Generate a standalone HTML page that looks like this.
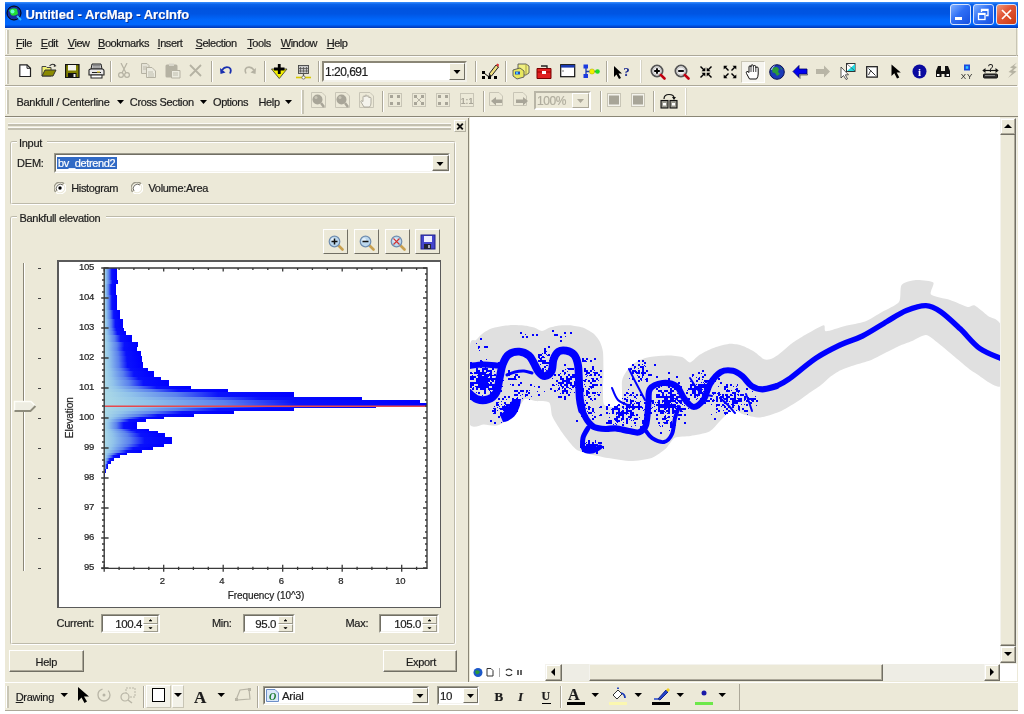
<!DOCTYPE html><html><head><meta charset="utf-8"><style>
html,body{margin:0;padding:0;width:1024px;height:714px;overflow:hidden;background:#fff;font-family:"Liberation Sans",sans-serif;}
.t{position:absolute;white-space:pre;line-height:1.117;-webkit-text-stroke:0.2px currentColor;}
u{text-decoration:underline;text-underline-offset:1px;}
</style></head><body>
<div id="w" style="position:absolute;left:0;top:0;width:1024px;height:714px;filter:blur(0.5px)"><div style="position:absolute;left:5px;top:2px;width:1013px;height:709px;background:#ECE9D8"></div>
<div style="position:absolute;left:5px;top:2px;width:1013px;height:26px;background:linear-gradient(to bottom,#3a90ff 0%,#0a62ea 9%,#0054e0 25%,#0055e3 45%,#0066fa 68%,#0068ff 86%,#0046d0 95%,#0038b0 100%)"></div>
<div class="t" style="left:25.5px;top:8.23px;font-size:13px;color:#fff;font-weight:bold;text-shadow:1px 1px 0 #0b2c8a;">Untitled - ArcMap - ArcInfo</div>
<svg style="position:absolute;left:6px;top:5px;" width="17" height="17" viewBox="0 0 17 17"><circle cx="8" cy="8" r="7" fill="#1a2fa0" stroke="#000" stroke-width="1"/><path d="M3 5 Q7 2 11 4 L12 9 Q8 12 5 10 Z" fill="#22dd33"/><circle cx="6.5" cy="6.5" r="2" fill="#66ffcc"/><line x1="11" y1="11" x2="15" y2="15" stroke="#33bbff" stroke-width="2"/></svg>
<div style="position:absolute;left:950px;top:4px;width:21px;height:21px;box-sizing:border-box;border:1px solid #d8e4fc;border-radius:3px;background:linear-gradient(135deg,#7fb0ff 0%,#2f6ff5 45%,#1650e0 100%)"></div>
<div style="position:absolute;left:973px;top:4px;width:21px;height:21px;box-sizing:border-box;border:1px solid #d8e4fc;border-radius:3px;background:linear-gradient(135deg,#7fb0ff 0%,#2f6ff5 45%,#1650e0 100%)"></div>
<div style="position:absolute;left:996px;top:4px;width:21px;height:21px;box-sizing:border-box;border:1px solid #d8e4fc;border-radius:3px;background:linear-gradient(135deg,#f09a7a 0%,#e2583a 40%,#cc3a10 100%)"></div>
<div style="position:absolute;left:955px;top:17px;width:7px;height:2.5px;background:#fff"></div>
<svg style="position:absolute;left:973px;top:4px;" width="21" height="21" viewBox="0 0 21 21"><rect x="5.5" y="9.5" width="6.5" height="6" fill="none" stroke="#fff" stroke-width="1.3"/><path d="M5.5 10 H12" stroke="#fff" stroke-width="2"/><path d="M8.5 8 V5.5 H15 V11.5 H13" fill="none" stroke="#fff" stroke-width="1.3"/><path d="M8.5 6 H15" stroke="#fff" stroke-width="2"/></svg>
<svg style="position:absolute;left:996px;top:4px;" width="21" height="21" viewBox="0 0 21 21"><path d="M6 6 L15 15 M15 6 L6 15" stroke="#fff" stroke-width="1.7"/></svg>
<div style="position:absolute;left:5px;top:28px;width:1013px;height:1px;background:#f8f7f0"></div>
<div style="position:absolute;left:6px;top:30px;width:1px;height:24px;background:#fff"></div>
<div style="position:absolute;left:7px;top:30px;width:2px;height:24px;background:#c9c6b6"></div>
<div class="t" style="left:16px;top:37.05px;font-size:11px;color:#1c1c1c;font-weight:normal;letter-spacing:-0.45px;"><u>F</u>ile</div>
<div class="t" style="left:40.8px;top:37.05px;font-size:11px;color:#1c1c1c;font-weight:normal;letter-spacing:-0.45px;"><u>E</u>dit</div>
<div class="t" style="left:67.7px;top:37.05px;font-size:11px;color:#1c1c1c;font-weight:normal;letter-spacing:-0.45px;"><u>V</u>iew</div>
<div class="t" style="left:98px;top:37.05px;font-size:11px;color:#1c1c1c;font-weight:normal;letter-spacing:-0.45px;"><u>B</u>ookmarks</div>
<div class="t" style="left:157.6px;top:37.05px;font-size:11px;color:#1c1c1c;font-weight:normal;letter-spacing:-0.45px;"><u>I</u>nsert</div>
<div class="t" style="left:195.5px;top:37.05px;font-size:11px;color:#1c1c1c;font-weight:normal;letter-spacing:-0.45px;"><u>S</u>election</div>
<div class="t" style="left:247.3px;top:37.05px;font-size:11px;color:#1c1c1c;font-weight:normal;letter-spacing:-0.45px;"><u>T</u>ools</div>
<div class="t" style="left:280.7px;top:37.05px;font-size:11px;color:#1c1c1c;font-weight:normal;letter-spacing:-0.45px;"><u>W</u>indow</div>
<div class="t" style="left:326.7px;top:37.05px;font-size:11px;color:#1c1c1c;font-weight:normal;letter-spacing:-0.45px;"><u>H</u>elp</div>
<div style="position:absolute;left:5px;top:55px;width:1013px;height:1px;background:#ACA899"></div>
<div style="position:absolute;left:5px;top:56px;width:1013px;height:1px;#fff"></div>
<div style="position:absolute;left:5px;top:56px;width:1013px;height:1px;background:#fdfdfb"></div>
<div style="position:absolute;left:6px;top:60px;width:1px;height:24px;background:#fff"></div>
<div style="position:absolute;left:7px;top:60px;width:2px;height:24px;background:#c9c6b6"></div>
<div style="position:absolute;left:110px;top:61px;width:1px;height:21px;background:#ACA899"></div>
<div style="position:absolute;left:111px;top:61px;width:1px;height:21px;background:#fff"></div>
<div style="position:absolute;left:211px;top:61px;width:1px;height:21px;background:#ACA899"></div>
<div style="position:absolute;left:212px;top:61px;width:1px;height:21px;background:#fff"></div>
<div style="position:absolute;left:264px;top:61px;width:1px;height:21px;background:#ACA899"></div>
<div style="position:absolute;left:265px;top:61px;width:1px;height:21px;background:#fff"></div>
<div style="position:absolute;left:318px;top:61px;width:1px;height:21px;background:#ACA899"></div>
<div style="position:absolute;left:319px;top:61px;width:1px;height:21px;background:#fff"></div>
<div style="position:absolute;left:475px;top:61px;width:1px;height:21px;background:#ACA899"></div>
<div style="position:absolute;left:476px;top:61px;width:1px;height:21px;background:#fff"></div>
<div style="position:absolute;left:505px;top:61px;width:1px;height:21px;background:#ACA899"></div>
<div style="position:absolute;left:506px;top:61px;width:1px;height:21px;background:#fff"></div>
<div style="position:absolute;left:606px;top:61px;width:1px;height:21px;background:#ACA899"></div>
<div style="position:absolute;left:607px;top:61px;width:1px;height:21px;background:#fff"></div>
<div style="position:absolute;left:5px;top:85px;width:1013px;height:1px;background:#ACA899"></div>
<div style="position:absolute;left:5px;top:86px;width:1013px;height:1px;background:#fdfdfb"></div>
<div style="position:absolute;left:322px;top:61px;width:145px;height:21px;box-sizing:border-box;border:1px solid #7f9db9;background:#fff;border-color:#8a8676 #f2f1ea #f2f1ea #8a8676;border-width:2px"></div>
<div class="t" style="left:325px;top:66.14px;font-size:12px;color:#1c1c1c;font-weight:normal;letter-spacing:-0.5px;">1:20,691</div>
<div style="position:absolute;left:449px;top:63px;width:16px;height:17px;background:#ECE9D8;box-sizing:border-box;border:1px solid;border-color:#fff #716f64 #716f64 #fff"></div>
<svg style="position:absolute;left:449px;top:63px;" width="16" height="17" viewBox="0 0 16 17"><path d="M4.5 7 H11.5 L8 11 Z" fill="#000"/></svg>
<div style="position:absolute;left:6px;top:90px;width:1px;height:24px;background:#fff"></div>
<div style="position:absolute;left:7px;top:90px;width:2px;height:24px;background:#c9c6b6"></div>
<div class="t" style="left:16.4px;top:96.05px;font-size:11px;color:#1c1c1c;font-weight:normal;letter-spacing:-0.25px;">Bankfull / Centerline</div>
<svg style="position:absolute;left:117px;top:100px;" width="8" height="5" viewBox="0 0 8 5"><path d="M0 0 H7 L3.5 4 Z" fill="#000"/></svg>
<div class="t" style="left:129.8px;top:96.05px;font-size:11px;color:#1c1c1c;font-weight:normal;letter-spacing:-0.35px;">Cross Section</div>
<svg style="position:absolute;left:200px;top:100px;" width="8" height="5" viewBox="0 0 8 5"><path d="M0 0 H7 L3.5 4 Z" fill="#000"/></svg>
<div class="t" style="left:213px;top:96.05px;font-size:11px;color:#1c1c1c;font-weight:normal;letter-spacing:-0.4px;">Options</div>
<div class="t" style="left:258.4px;top:96.05px;font-size:11px;color:#1c1c1c;font-weight:normal;letter-spacing:-0.3px;">Help</div>
<svg style="position:absolute;left:285px;top:100px;" width="8" height="5" viewBox="0 0 8 5"><path d="M0 0 H7 L3.5 4 Z" fill="#000"/></svg>
<div style="position:absolute;left:301px;top:90px;width:1px;height:24px;background:#fff"></div>
<div style="position:absolute;left:302px;top:90px;width:2px;height:24px;background:#c9c6b6"></div>
<div style="position:absolute;left:382px;top:91px;width:1px;height:21px;background:#ACA899"></div>
<div style="position:absolute;left:383px;top:91px;width:1px;height:21px;background:#fff"></div>
<div style="position:absolute;left:483px;top:91px;width:1px;height:21px;background:#ACA899"></div>
<div style="position:absolute;left:484px;top:91px;width:1px;height:21px;background:#fff"></div>
<div style="position:absolute;left:600px;top:91px;width:1px;height:21px;background:#ACA899"></div>
<div style="position:absolute;left:601px;top:91px;width:1px;height:21px;background:#fff"></div>
<div style="position:absolute;left:653px;top:91px;width:1px;height:21px;background:#ACA899"></div>
<div style="position:absolute;left:654px;top:91px;width:1px;height:21px;background:#fff"></div>
<div style="position:absolute;left:5px;top:116px;width:1013px;height:1px;background:#8a8676"></div>
<div style="position:absolute;left:534px;top:91px;width:57px;height:19px;box-sizing:border-box;border:2px solid;border-color:#b8b5a6 #fff #fff #b8b5a6"></div>
<div class="t" style="left:537px;top:95.14px;font-size:12px;color:#b0ad9e;font-weight:normal;letter-spacing:-0.4px;">100%</div>
<div style="position:absolute;left:572px;top:93px;width:17px;height:15px;box-sizing:border-box;border:1px solid;border-color:#fff #aca899 #aca899 #fff"></div>
<svg style="position:absolute;left:572px;top:93px;" width="17" height="15" viewBox="0 0 17 15"><path d="M5 6 H12 L8.5 10 Z" fill="#aca899"/></svg>
<div style="position:absolute;left:5px;top:117px;width:464px;height:565px;background:#ECE9D8"></div>
<div style="position:absolute;left:468px;top:117px;width:1px;height:565px;background:#8a8676"></div>
<div style="position:absolute;left:5px;top:117px;width:464px;height:1px;background:#f7f6f0"></div>
<div style="position:absolute;left:8px;top:122.5px;width:443px;height:1.5px;background:#fbfaf5"></div>
<div style="position:absolute;left:8px;top:124.0px;width:443px;height:1.5px;background:#c3c0b0"></div>
<div style="position:absolute;left:8px;top:126.5px;width:443px;height:1.5px;background:#fbfaf5"></div>
<div style="position:absolute;left:8px;top:128.0px;width:443px;height:1.5px;background:#c3c0b0"></div>
<div style="position:absolute;left:454px;top:120px;width:12px;height:12px;box-sizing:border-box;border:1px solid;border-color:#fff #b5b2a2 #b5b2a2 #fff"></div>
<svg style="position:absolute;left:454px;top:120px;" width="12" height="12" viewBox="0 0 12 12"><path d="M3.2 3.7 L8.8 9.3 M8.8 3.7 L3.2 9.3" stroke="#111" stroke-width="1.9"/></svg>
<div style="position:absolute;left:10px;top:141px;width:446px;height:64px;box-sizing:border-box;border:1px solid;border-color:#bdbaaa #fff #fff #bdbaaa;border-radius:3px"></div>
<div style="position:absolute;left:11px;top:142px;width:444px;height:62px;box-sizing:border-box;border:1px solid;border-color:#fff #bdbaaa #bdbaaa #fff;border-radius:2px"></div>
<div style="position:absolute;left:16.5px;top:135px;width:30px;height:12px;background:#ECE9D8"></div>
<div class="t" style="left:19.0px;top:136.64px;font-size:11px;color:#1c1c1c;font-weight:normal;letter-spacing:-0.3px;">Input</div>
<div class="t" style="left:17px;top:157.04px;font-size:11px;color:#1c1c1c;font-weight:normal;letter-spacing:-0.2px;">DEM:</div>
<div style="position:absolute;left:54px;top:153px;width:396px;height:20px;box-sizing:border-box;border:1px solid;border-color:#9c9a8c #fff #fff #9c9a8c;background:#fff"></div>
<div style="position:absolute;left:55px;top:154px;width:394px;height:18px;box-sizing:border-box;border:1px solid;border-color:#716f64 #f4f3ee #f4f3ee #716f64;"></div>
<div style="position:absolute;left:57px;top:157px;width:60px;height:12px;background:#316ac5"></div>
<div class="t" style="left:58px;top:157.04px;font-size:11px;color:#fff;font-weight:normal;letter-spacing:-0.35px;">bv_detrend2</div>
<div style="position:absolute;left:432px;top:155px;width:17px;height:16px;background:#ECE9D8;box-sizing:border-box;border:1px solid;border-color:#fff #716f64 #716f64 #fff;box-shadow:inset -1px -1px 0 #aca899"></div>
<svg style="position:absolute;left:432px;top:155px;" width="17" height="17" viewBox="0 0 17 17"><path d="M4.5 7 H11.5 L8 11 Z" fill="#000"/></svg>
<svg style="position:absolute;left:54px;top:182px;" width="12" height="12" viewBox="0 0 12 12"><path d="M10.2 1.8 A5.6 5.6 0 0 0 1.8 10.2" fill="none" stroke="#9a988a" stroke-width="1.2"/><path d="M1.8 10.2 A5.6 5.6 0 0 0 10.2 1.8" fill="none" stroke="#fff" stroke-width="1.2"/><circle cx="6" cy="6" r="4.3" fill="#fff"/><path d="M9 3 A4.3 4.3 0 0 0 3 9" fill="none" stroke="#5a5850" stroke-width="0.9"/><circle cx="6" cy="6" r="1.7" fill="#000"/></svg>
<div class="t" style="left:71.2px;top:182.04px;font-size:11px;color:#1c1c1c;font-weight:normal;letter-spacing:-0.35px;">Histogram</div>
<svg style="position:absolute;left:131px;top:182px;" width="12" height="12" viewBox="0 0 12 12"><path d="M10.2 1.8 A5.6 5.6 0 0 0 1.8 10.2" fill="none" stroke="#9a988a" stroke-width="1.2"/><path d="M1.8 10.2 A5.6 5.6 0 0 0 10.2 1.8" fill="none" stroke="#fff" stroke-width="1.2"/><circle cx="6" cy="6" r="4.3" fill="#fff"/><path d="M9 3 A4.3 4.3 0 0 0 3 9" fill="none" stroke="#5a5850" stroke-width="0.9"/></svg>
<div class="t" style="left:148.4px;top:182.04px;font-size:11px;color:#1c1c1c;font-weight:normal;letter-spacing:-0.3px;">Volume:Area</div>
<div style="position:absolute;left:10px;top:216px;width:446px;height:429px;box-sizing:border-box;border:1px solid;border-color:#bdbaaa #fff #fff #bdbaaa;border-radius:3px"></div>
<div style="position:absolute;left:11px;top:217px;width:444px;height:427px;box-sizing:border-box;border:1px solid;border-color:#fff #bdbaaa #bdbaaa #fff;border-radius:2px"></div>
<div style="position:absolute;left:17px;top:210px;width:89px;height:12px;background:#ECE9D8"></div>
<div class="t" style="left:19.5px;top:211.64px;font-size:11px;color:#1c1c1c;font-weight:normal;letter-spacing:-0.3px;">Bankfull elevation</div>
<div style="position:absolute;left:323px;top:229px;width:25px;height:25px;box-sizing:border-box;border:1px solid;border-color:#fff #716f64 #716f64 #fff;background:#ECE9D8"></div>
<div style="position:absolute;left:354px;top:229px;width:25px;height:25px;box-sizing:border-box;border:1px solid;border-color:#fff #716f64 #716f64 #fff;background:#ECE9D8"></div>
<div style="position:absolute;left:385px;top:229px;width:25px;height:25px;box-sizing:border-box;border:1px solid;border-color:#fff #716f64 #716f64 #fff;background:#ECE9D8"></div>
<div style="position:absolute;left:415px;top:229px;width:25px;height:25px;box-sizing:border-box;border:1px solid;border-color:#fff #716f64 #716f64 #fff;background:#ECE9D8"></div>
<svg style="position:absolute;left:328px;top:235px;" width="16" height="16" viewBox="0 0 16 16"><line x1="10" y1="10" x2="14.5" y2="14.5" stroke="#c8a050" stroke-width="2.6" stroke-linecap="round"/><circle cx="6.5" cy="6.5" r="5.3" fill="#bcd8ee" stroke="#6f8db0" stroke-width="1.2"/><circle cx="5" cy="5" r="2" fill="#e4f0fa"/><path d="M3.5 6.5 H9.5 M6.5 3.5 V9.5" stroke="#111" stroke-width="1.5"/></svg>
<svg style="position:absolute;left:359px;top:235px;" width="16" height="16" viewBox="0 0 16 16"><line x1="10" y1="10" x2="14.5" y2="14.5" stroke="#c8a050" stroke-width="2.6" stroke-linecap="round"/><circle cx="6.5" cy="6.5" r="5.3" fill="#bcd8ee" stroke="#6f8db0" stroke-width="1.2"/><circle cx="5" cy="5" r="2" fill="#e4f0fa"/><path d="M3.5 6.5 H9.5" stroke="#111" stroke-width="1.5"/></svg>
<svg style="position:absolute;left:390px;top:235px;" width="16" height="16" viewBox="0 0 16 16"><line x1="10" y1="10" x2="14.5" y2="14.5" stroke="#c8a050" stroke-width="2.6" stroke-linecap="round"/><circle cx="6.5" cy="6.5" r="5.3" fill="#bcd8ee" stroke="#6f8db0" stroke-width="1.2"/><circle cx="5" cy="5" r="2" fill="#e4f0fa"/><path d="M3.5 3.5 L9.5 9.5 M9.5 3.5 L3.5 9.5" stroke="#d03030" stroke-width="1.1"/></svg>
<svg style="position:absolute;left:420px;top:234px;" width="16" height="16" viewBox="0 0 16 16"><rect x="1" y="1" width="14" height="14" fill="#4444cc" stroke="#22228a"/><rect x="4" y="2" width="8" height="6" fill="#eef"/><rect x="4" y="10" width="7" height="5" fill="#223"/><rect x="8" y="11" width="2" height="3" fill="#aab"/></svg>
<div style="position:absolute;left:23px;top:263px;width:1px;height:308px;background:#8a8676"></div>
<div style="position:absolute;left:24px;top:263px;width:1px;height:308px;background:#fff"></div>
<div style="position:absolute;left:37.5px;top:267.5px;width:3.5px;height:1px;background:#444"></div>
<div style="position:absolute;left:37.5px;top:297.5px;width:3.5px;height:1px;background:#444"></div>
<div style="position:absolute;left:37.5px;top:327.5px;width:3.5px;height:1px;background:#444"></div>
<div style="position:absolute;left:37.5px;top:357.5px;width:3.5px;height:1px;background:#444"></div>
<div style="position:absolute;left:37.5px;top:387.5px;width:3.5px;height:1px;background:#444"></div>
<div style="position:absolute;left:37.5px;top:417.5px;width:3.5px;height:1px;background:#444"></div>
<div style="position:absolute;left:37.5px;top:447.5px;width:3.5px;height:1px;background:#444"></div>
<div style="position:absolute;left:37.5px;top:477.5px;width:3.5px;height:1px;background:#444"></div>
<div style="position:absolute;left:37.5px;top:507.5px;width:3.5px;height:1px;background:#444"></div>
<div style="position:absolute;left:37.5px;top:537.5px;width:3.5px;height:1px;background:#444"></div>
<div style="position:absolute;left:37.5px;top:567.5px;width:3.5px;height:1px;background:#444"></div>
<svg style="position:absolute;left:13px;top:400px;" width="24" height="13" viewBox="0 0 24 13"><path d="M1.5 1.5 H18 L22.5 6 L17.5 11 H1.5 Z" fill="#eeede2"/><path d="M1.5 11 V1.5 H18 L22.5 6" fill="none" stroke="#fdfdf8" stroke-width="1.5"/><path d="M1.5 11 H17.5 L22.5 6" fill="none" stroke="#8e8c7c" stroke-width="1.8"/></svg>
<div style="position:absolute;left:57px;top:260px;width:384px;height:348px;box-sizing:border-box;border:2px solid #5a5a5a;border-right-width:1.5px;border-bottom-width:1.5px;background:#fff"></div>
<svg style="position:absolute;left:57px;top:260px;" width="384" height="347" viewBox="0 0 384 347"><defs><linearGradient id="hg" x1="0" y1="0" x2="1" y2="0"><stop offset="0" stop-color="#acdae6"/><stop offset="0.14" stop-color="#90c2ea"/><stop offset="0.38" stop-color="#5a80ee"/><stop offset="0.6" stop-color="#0a12fc"/><stop offset="1" stop-color="#0000ff"/></linearGradient></defs><g transform="translate(-57,-260)"><rect x="104.2" y="268" width="12.5" height="12" fill="url(#hg)" shape-rendering="crispEdges"/><rect x="104.2" y="280" width="13.6" height="4" fill="url(#hg)" shape-rendering="crispEdges"/><rect x="104.2" y="284" width="11.3" height="11" fill="url(#hg)" shape-rendering="crispEdges"/><rect x="104.2" y="295" width="12.8" height="15" fill="url(#hg)" shape-rendering="crispEdges"/><rect x="104.2" y="310" width="15.8" height="9" fill="url(#hg)" shape-rendering="crispEdges"/><rect x="104.2" y="319" width="18.4" height="9" fill="url(#hg)" shape-rendering="crispEdges"/><rect x="104.2" y="328" width="20.0" height="3" fill="url(#hg)" shape-rendering="crispEdges"/><rect x="104.2" y="331" width="21.8" height="4" fill="url(#hg)" shape-rendering="crispEdges"/><rect x="104.2" y="335" width="27.3" height="7" fill="url(#hg)" shape-rendering="crispEdges"/><rect x="104.2" y="342" width="33.6" height="5" fill="url(#hg)" shape-rendering="crispEdges"/><rect x="104.2" y="347" width="32.8" height="4" fill="url(#hg)" shape-rendering="crispEdges"/><rect x="104.2" y="351" width="36.3" height="5" fill="url(#hg)" shape-rendering="crispEdges"/><rect x="104.2" y="356" width="37.8" height="6" fill="url(#hg)" shape-rendering="crispEdges"/><rect x="104.2" y="362" width="38.8" height="6" fill="url(#hg)" shape-rendering="crispEdges"/><rect x="104.2" y="368" width="44.1" height="3" fill="url(#hg)" shape-rendering="crispEdges"/><rect x="104.2" y="371" width="49.4" height="6" fill="url(#hg)" shape-rendering="crispEdges"/><rect x="104.2" y="377" width="56.8" height="3" fill="url(#hg)" shape-rendering="crispEdges"/><rect x="104.2" y="380" width="65.2" height="6" fill="url(#hg)" shape-rendering="crispEdges"/><rect x="104.2" y="386" width="87.2" height="3" fill="url(#hg)" shape-rendering="crispEdges"/><rect x="104.2" y="389" width="123.3" height="3" fill="url(#hg)" shape-rendering="crispEdges"/><rect x="104.2" y="392" width="189.8" height="5" fill="url(#hg)" shape-rendering="crispEdges"/><rect x="104.2" y="397" width="257.8" height="3" fill="url(#hg)" shape-rendering="crispEdges"/><rect x="104.2" y="400" width="316.2" height="3" fill="url(#hg)" shape-rendering="crispEdges"/><rect x="104.2" y="403" width="322.8" height="3" fill="url(#hg)" shape-rendering="crispEdges"/><rect x="104.2" y="406" width="271.4" height="2" fill="url(#hg)" shape-rendering="crispEdges"/><rect x="104.2" y="408" width="189.8" height="3" fill="url(#hg)" shape-rendering="crispEdges"/><rect x="104.2" y="411" width="129.8" height="3" fill="url(#hg)" shape-rendering="crispEdges"/><rect x="104.2" y="414" width="89.3" height="3" fill="url(#hg)" shape-rendering="crispEdges"/><rect x="104.2" y="417" width="59.8" height="2" fill="url(#hg)" shape-rendering="crispEdges"/><rect x="104.2" y="419" width="41.8" height="3" fill="url(#hg)" shape-rendering="crispEdges"/><rect x="104.2" y="422" width="32.6" height="7" fill="url(#hg)" shape-rendering="crispEdges"/><rect x="104.2" y="429" width="45.2" height="2" fill="url(#hg)" shape-rendering="crispEdges"/><rect x="104.2" y="431" width="53.8" height="2" fill="url(#hg)" shape-rendering="crispEdges"/><rect x="104.2" y="433" width="61.0" height="4" fill="url(#hg)" shape-rendering="crispEdges"/><rect x="104.2" y="437" width="67.3" height="7" fill="url(#hg)" shape-rendering="crispEdges"/><rect x="104.2" y="444" width="59.8" height="3" fill="url(#hg)" shape-rendering="crispEdges"/><rect x="104.2" y="447" width="48.3" height="3" fill="url(#hg)" shape-rendering="crispEdges"/><rect x="104.2" y="450" width="37.8" height="3" fill="url(#hg)" shape-rendering="crispEdges"/><rect x="104.2" y="453" width="23.1" height="2" fill="url(#hg)" shape-rendering="crispEdges"/><rect x="104.2" y="455" width="15.8" height="3" fill="url(#hg)" shape-rendering="crispEdges"/><rect x="104.2" y="458" width="9.5" height="3" fill="url(#hg)" shape-rendering="crispEdges"/><rect x="104.2" y="461" width="6.3" height="3" fill="url(#hg)" shape-rendering="crispEdges"/><rect x="104.2" y="464" width="4.2" height="5" fill="url(#hg)" shape-rendering="crispEdges"/><rect x="104.2" y="469" width="2.1" height="4" fill="url(#hg)" shape-rendering="crispEdges"/><rect x="104.2" y="473" width="0.4" height="5" fill="url(#hg)" shape-rendering="crispEdges"/><line x1="104.2" y1="406.2" x2="427" y2="406.2" stroke="#e8484c" stroke-width="1.4"/><path d="M104.2 268 V568.4 H427 V268 Z" fill="none" stroke="#3a3a3a" stroke-width="1.4"/><line x1="101.4" y1="568.4" x2="104.2" y2="568.4" stroke="#3a3a3a" stroke-width="1.4"/><path d="M101.2 268 H108.6 M423 268 H427 M102 274 H104.5 M425 274 H427 M102 280 H104.5 M425 280 H427 M102 286 H104.5 M425 286 H427 M102 292 H104.5 M425 292 H427 M101.2 298 H108.6 M423 298 H427 M102 304 H104.5 M425 304 H427 M102 310 H104.5 M425 310 H427 M102 316 H104.5 M425 316 H427 M102 322 H104.5 M425 322 H427 M101.2 328 H108.6 M423 328 H427 M102 334 H104.5 M425 334 H427 M102 340 H104.5 M425 340 H427 M102 346 H104.5 M425 346 H427 M102 352 H104.5 M425 352 H427 M101.2 358 H108.6 M423 358 H427 M102 364 H104.5 M425 364 H427 M102 370 H104.5 M425 370 H427 M102 376 H104.5 M425 376 H427 M102 382 H104.5 M425 382 H427 M101.2 388 H108.6 M423 388 H427 M102 394 H104.5 M425 394 H427 M102 400 H104.5 M425 400 H427 M102 406 H104.5 M425 406 H427 M102 412 H104.5 M425 412 H427 M101.2 418 H108.6 M423 418 H427 M102 424 H104.5 M425 424 H427 M102 430 H104.5 M425 430 H427 M102 436 H104.5 M425 436 H427 M102 442 H104.5 M425 442 H427 M101.2 448 H108.6 M423 448 H427 M102 454 H104.5 M425 454 H427 M102 460 H104.5 M425 460 H427 M102 466 H104.5 M425 466 H427 M102 472 H104.5 M425 472 H427 M101.2 478 H108.6 M423 478 H427 M102 484 H104.5 M425 484 H427 M102 490 H104.5 M425 490 H427 M102 496 H104.5 M425 496 H427 M102 502 H104.5 M425 502 H427 M101.2 508 H108.6 M423 508 H427 M102 514 H104.5 M425 514 H427 M102 520 H104.5 M425 520 H427 M102 526 H104.5 M425 526 H427 M102 532 H104.5 M425 532 H427 M101.2 538 H108.6 M423 538 H427 M102 544 H104.5 M425 544 H427 M102 550 H104.5 M425 550 H427 M102 556 H104.5 M425 556 H427 M102 562 H104.5 M425 562 H427 M101.2 568 H108.6 M423 568 H427 M104.2 564.8 V571.8 M104.2 268 V271.5 M119.1 566.8 V570 M119.1 268 V270 M133.9 566.8 V570 M133.9 268 V270 M148.8 566.8 V570 M148.8 268 V270 M163.7 564.8 V571.8 M163.7 268 V271.5 M178.6 566.8 V570 M178.6 268 V270 M193.4 566.8 V570 M193.4 268 V270 M208.3 566.8 V570 M208.3 268 V270 M223.2 564.8 V571.8 M223.2 268 V271.5 M238.1 566.8 V570 M238.1 268 V270 M252.9 566.8 V570 M252.9 268 V270 M267.8 566.8 V570 M267.8 268 V270 M282.7 564.8 V571.8 M282.7 268 V271.5 M297.6 566.8 V570 M297.6 268 V270 M312.4 566.8 V570 M312.4 268 V270 M327.3 566.8 V570 M327.3 268 V270 M342.2 564.8 V571.8 M342.2 268 V271.5 M357.1 566.8 V570 M357.1 268 V270 M371.9 566.8 V570 M371.9 268 V270 M386.8 566.8 V570 M386.8 268 V270 M401.7 564.8 V571.8 M401.7 268 V271.5 M416.6 566.8 V570 M416.6 268 V270" stroke="#3a3a3a" stroke-width="1.3" fill="none"/></g></svg>
<div class="t" style="left:50px;top:562.4px;width:44px;text-align:right;font-size:9.5px;color:#222;letter-spacing:-0.3px">95</div>
<div class="t" style="left:50px;top:532.4px;width:44px;text-align:right;font-size:9.5px;color:#222;letter-spacing:-0.3px">96</div>
<div class="t" style="left:50px;top:502.4px;width:44px;text-align:right;font-size:9.5px;color:#222;letter-spacing:-0.3px">97</div>
<div class="t" style="left:50px;top:472.4px;width:44px;text-align:right;font-size:9.5px;color:#222;letter-spacing:-0.3px">98</div>
<div class="t" style="left:50px;top:442.4px;width:44px;text-align:right;font-size:9.5px;color:#222;letter-spacing:-0.3px">99</div>
<div class="t" style="left:50px;top:412.4px;width:44px;text-align:right;font-size:9.5px;color:#222;letter-spacing:-0.3px">100</div>
<div class="t" style="left:50px;top:382.4px;width:44px;text-align:right;font-size:9.5px;color:#222;letter-spacing:-0.3px">101</div>
<div class="t" style="left:50px;top:352.4px;width:44px;text-align:right;font-size:9.5px;color:#222;letter-spacing:-0.3px">102</div>
<div class="t" style="left:50px;top:322.4px;width:44px;text-align:right;font-size:9.5px;color:#222;letter-spacing:-0.3px">103</div>
<div class="t" style="left:50px;top:292.4px;width:44px;text-align:right;font-size:9.5px;color:#222;letter-spacing:-0.3px">104</div>
<div class="t" style="left:50px;top:262.4px;width:44px;text-align:right;font-size:9.5px;color:#222;letter-spacing:-0.3px">105</div>
<div class="t" style="left:142.2px;top:576px;width:40px;text-align:center;font-size:9.5px;color:#222;letter-spacing:-0.3px">2</div>
<div class="t" style="left:201.7px;top:576px;width:40px;text-align:center;font-size:9.5px;color:#222;letter-spacing:-0.3px">4</div>
<div class="t" style="left:261.2px;top:576px;width:40px;text-align:center;font-size:9.5px;color:#222;letter-spacing:-0.3px">6</div>
<div class="t" style="left:320.7px;top:576px;width:40px;text-align:center;font-size:9.5px;color:#222;letter-spacing:-0.3px">8</div>
<div class="t" style="left:380.2px;top:576px;width:40px;text-align:center;font-size:9.5px;color:#222;letter-spacing:-0.3px">10</div>
<div class="t" style="left:216px;top:590px;width:100px;text-align:center;font-size:10px;color:#222;letter-spacing:-0.1px">Frequency (10^3)</div>
<div class="t" style="left:40px;top:411.5px;width:60px;text-align:center;font-size:10.2px;color:#222;letter-spacing:-0.1px;transform:rotate(-90deg)">Elevation</div>
<div class="t" style="left:56.6px;top:616.54px;font-size:11px;color:#1c1c1c;font-weight:normal;letter-spacing:-0.3px;">Current:</div>
<div style="position:absolute;left:101px;top:613.5px;width:59px;height:19px;box-sizing:border-box;border:1px solid;border-color:#9c9a8c #fff #fff #9c9a8c;background:#fff"></div>
<div style="position:absolute;left:102px;top:614.5px;width:57px;height:17px;box-sizing:border-box;border:1px solid;border-color:#716f64 #f4f3ee #f4f3ee #716f64;"></div>
<div class="t" style="left:82px;top:617.59px;font-size:11.5px;color:#1c1c1c;font-weight:normal;letter-spacing:-0.4px;text-align:right;width:60px;">100.4</div>
<div style="position:absolute;left:143px;top:615.5px;width:15px;height:8px;box-sizing:border-box;border:1px solid;border-color:#fff #9c9a8c #9c9a8c #fff;background:#ECE9D8"></div>
<div style="position:absolute;left:143px;top:623.5px;width:15px;height:8px;box-sizing:border-box;border:1px solid;border-color:#fff #9c9a8c #9c9a8c #fff;background:#ECE9D8"></div>
<svg style="position:absolute;left:143px;top:615.5px;" width="15" height="16" viewBox="0 0 15 16"><path d="M6 5 H9 L7.5 3.5Z M6 11.5 H9 L7.5 13Z" fill="#000" stroke="#000" stroke-width="0.6"/></svg>
<div class="t" style="left:212px;top:616.54px;font-size:11px;color:#1c1c1c;font-weight:normal;letter-spacing:-0.3px;">Min:</div>
<div style="position:absolute;left:243px;top:613.5px;width:52px;height:19px;box-sizing:border-box;border:1px solid;border-color:#9c9a8c #fff #fff #9c9a8c;background:#fff"></div>
<div style="position:absolute;left:244px;top:614.5px;width:50px;height:17px;box-sizing:border-box;border:1px solid;border-color:#716f64 #f4f3ee #f4f3ee #716f64;"></div>
<div class="t" style="left:216px;top:617.59px;font-size:11.5px;color:#1c1c1c;font-weight:normal;letter-spacing:-0.4px;text-align:right;width:60px;">95.0</div>
<div style="position:absolute;left:278px;top:615.5px;width:15px;height:8px;box-sizing:border-box;border:1px solid;border-color:#fff #9c9a8c #9c9a8c #fff;background:#ECE9D8"></div>
<div style="position:absolute;left:278px;top:623.5px;width:15px;height:8px;box-sizing:border-box;border:1px solid;border-color:#fff #9c9a8c #9c9a8c #fff;background:#ECE9D8"></div>
<svg style="position:absolute;left:278px;top:615.5px;" width="15" height="16" viewBox="0 0 15 16"><path d="M6 5 H9 L7.5 3.5Z M6 11.5 H9 L7.5 13Z" fill="#000" stroke="#000" stroke-width="0.6"/></svg>
<div class="t" style="left:345.5px;top:616.54px;font-size:11px;color:#1c1c1c;font-weight:normal;letter-spacing:-0.3px;">Max:</div>
<div style="position:absolute;left:379px;top:613.5px;width:60px;height:19px;box-sizing:border-box;border:1px solid;border-color:#9c9a8c #fff #fff #9c9a8c;background:#fff"></div>
<div style="position:absolute;left:380px;top:614.5px;width:58px;height:17px;box-sizing:border-box;border:1px solid;border-color:#716f64 #f4f3ee #f4f3ee #716f64;"></div>
<div class="t" style="left:361px;top:617.59px;font-size:11.5px;color:#1c1c1c;font-weight:normal;letter-spacing:-0.4px;text-align:right;width:60px;">105.0</div>
<div style="position:absolute;left:422px;top:615.5px;width:15px;height:8px;box-sizing:border-box;border:1px solid;border-color:#fff #9c9a8c #9c9a8c #fff;background:#ECE9D8"></div>
<div style="position:absolute;left:422px;top:623.5px;width:15px;height:8px;box-sizing:border-box;border:1px solid;border-color:#fff #9c9a8c #9c9a8c #fff;background:#ECE9D8"></div>
<svg style="position:absolute;left:422px;top:615.5px;" width="15" height="16" viewBox="0 0 15 16"><path d="M6 5 H9 L7.5 3.5Z M6 11.5 H9 L7.5 13Z" fill="#000" stroke="#000" stroke-width="0.6"/></svg>
<div style="position:absolute;left:9px;top:650px;width:75px;height:22px;box-sizing:border-box;border:1px solid;border-color:#fff #716f64 #716f64 #fff;background:#ECE9D8;box-shadow:inset -1px -1px 0 #aca899"></div>
<div class="t" style="left:35.6px;top:655.54px;font-size:11px;color:#1c1c1c;font-weight:normal;letter-spacing:-0.3px;">Help</div>
<div style="position:absolute;left:383px;top:650px;width:74px;height:22px;box-sizing:border-box;border:1px solid;border-color:#fff #716f64 #716f64 #fff;background:#ECE9D8;box-shadow:inset -1px -1px 0 #aca899"></div>
<div class="t" style="left:406px;top:655.54px;font-size:11px;color:#1c1c1c;font-weight:normal;letter-spacing:-0.3px;">Export</div>
<div style="position:absolute;left:470px;top:117px;width:530px;height:547px;background:#fff"></div>
<svg style="position:absolute;left:470px;top:117px;" width="530" height="547" viewBox="0 0 530 547"><g transform="translate(-470,-117)"><path fill="#e0e0e0" d="M470.0 346.0 C470.8 336.4 474.6 341.4 476.0 340.0 C477.4 338.6 480.4 335.3 482.0 334.0 C483.6 332.7 487.9 329.9 490.0 329.0 C492.1 328.1 497.4 327.0 500.0 326.5 C502.6 326.0 509.2 325.1 512.0 325.0 C514.8 324.9 521.4 325.2 524.0 325.5 C526.6 325.8 531.9 326.9 534.0 327.5 C536.1 328.1 540.1 331.0 542.0 331.0 C543.9 331.0 547.9 328.1 550.0 327.5 C552.1 326.9 557.4 325.7 560.0 325.5 C562.6 325.3 569.2 325.2 572.0 325.5 C574.8 325.8 581.4 327.0 584.0 328.0 C586.6 329.0 592.1 332.4 594.0 334.0 C595.9 335.6 599.0 339.9 600.0 342.0 C601.0 344.1 602.6 348.5 603.0 352.0 C603.4 355.5 603.4 365.9 603.5 372.0 C603.6 378.1 602.0 400.7 604.0 404.5 C606.0 408.3 618.9 407.2 621.0 404.5 C623.1 401.8 621.4 384.8 622.0 381.0 C622.6 377.2 624.8 373.9 626.0 372.0 C627.2 370.1 630.4 366.4 632.0 365.0 C633.6 363.6 637.9 360.9 640.0 360.0 C642.1 359.1 646.7 357.5 650.0 357.0 C653.3 356.5 664.3 355.5 668.0 355.5 C671.7 355.5 679.4 356.2 682.0 357.0 C684.6 357.8 688.1 362.5 690.0 362.4 C691.9 362.3 696.2 357.3 698.0 356.0 C699.8 354.7 703.3 352.7 705.4 351.6 C707.5 350.6 713.3 347.9 716.0 347.0 C718.7 346.1 725.7 344.1 728.5 343.9 C731.3 343.7 737.7 344.5 740.0 345.0 C742.3 345.5 746.6 347.6 748.5 348.5 C750.4 349.4 754.2 351.7 756.0 353.0 C757.8 354.3 762.4 358.6 764.0 359.3 C765.6 360.0 768.4 359.8 770.0 359.3 C771.6 358.8 775.5 356.8 778.0 355.0 C780.5 353.2 788.6 345.8 791.7 343.5 C794.9 341.2 801.3 337.1 805.0 335.0 C808.7 332.9 821.0 325.6 823.5 325.2 C826.0 324.8 823.5 331.2 826.0 331.3 C828.5 331.4 840.5 327.1 845.0 326.0 C849.5 324.9 860.7 323.1 865.0 321.5 C869.3 319.9 878.0 314.3 882.0 312.0 C886.0 309.7 896.7 305.2 899.0 302.0 C901.3 298.8 899.6 287.5 901.6 284.9 C903.6 282.3 912.3 280.3 916.0 280.0 C919.7 279.7 931.5 280.7 933.3 282.4 C935.0 284.1 929.1 292.5 931.0 294.6 C932.9 296.7 945.7 298.6 950.0 300.0 C954.3 301.4 964.6 306.2 967.5 306.9 C970.4 307.6 972.4 304.5 974.8 305.6 C977.2 306.7 984.9 313.6 988.0 316.0 C991.1 318.4 999.5 318.3 1001.0 326.4 C1002.5 334.5 1004.1 380.1 1001.0 385.5 C997.9 390.9 979.3 375.4 974.8 372.8 C970.2 370.2 964.8 365.3 962.0 363.0 C959.2 360.7 953.2 355.5 950.4 353.2 C947.6 350.9 940.8 345.1 938.0 343.0 C935.2 340.9 929.0 335.2 926.0 335.0 C923.0 334.8 915.1 339.7 912.0 341.0 C908.9 342.3 902.1 344.6 899.0 346.0 C895.9 347.4 888.4 351.3 885.0 353.0 C881.6 354.7 873.4 359.2 869.9 360.6 C866.4 362.0 858.4 363.9 855.0 365.0 C851.6 366.1 843.5 368.9 840.6 370.3 C837.7 371.7 832.3 375.3 830.0 377.0 C827.7 378.7 823.6 383.0 821.0 385.0 C818.4 387.0 810.8 392.0 808.0 394.0 C805.2 396.0 799.9 399.9 796.6 402.0 C793.3 404.1 783.8 410.0 779.5 411.8 C775.2 413.6 764.2 417.2 760.0 417.5 C755.8 417.8 746.9 415.3 743.8 414.4 C740.6 413.5 735.3 409.2 732.8 409.7 C730.3 410.2 724.6 416.4 721.9 419.0 C719.2 421.6 713.1 429.6 709.4 431.6 C705.7 433.6 694.6 435.3 690.6 436.0 C686.6 436.7 677.9 436.3 675.0 437.8 C672.1 439.3 668.3 446.4 665.6 448.8 C662.9 451.1 655.6 456.6 651.6 458.0 C647.6 459.4 636.1 461.0 631.0 461.0 C625.9 461.0 612.7 458.8 607.8 458.0 C602.9 457.2 592.6 454.9 589.0 454.0 C585.4 453.1 579.1 451.2 577.0 450.0 C574.9 448.8 572.8 446.1 571.0 444.0 C569.2 441.9 563.7 434.9 561.5 431.7 C559.3 428.5 553.7 419.7 552.3 416.3 C550.9 412.9 551.2 404.2 549.2 402.4 C547.2 400.6 538.2 401.3 535.3 400.9 C532.4 400.5 526.7 398.0 524.5 399.3 C522.3 400.6 518.7 409.3 516.8 411.7 C514.9 414.1 510.3 418.4 508.0 420.0 C505.7 421.6 499.6 425.0 496.8 425.5 C494.0 426.0 487.2 424.9 484.0 424.5 C480.8 424.1 470.6 431.2 469.0 422.0 C467.4 412.8 469.2 355.6 470.0 346.0Z"/><path fill="none" stroke="#0000ff" stroke-width="7.8" stroke-linejoin="round" stroke-linecap="round" d="M468.0 392.0 C469.5 393.2 473.8 398.1 477.2 399.3 C480.6 400.5 485.2 400.4 488.4 399.3 C491.6 398.2 494.3 396.2 496.2 392.6 C498.1 389.1 498.5 382.7 499.6 378.0 C500.7 373.3 501.2 368.3 502.7 364.4 C504.2 360.5 505.8 356.7 508.6 354.6 C511.4 352.5 515.9 351.5 519.3 351.7 C522.7 351.9 526.5 353.7 529.0 355.6 C531.5 357.6 532.4 360.6 534.0 363.4 C535.6 366.2 537.0 370.1 538.8 372.2 C540.6 374.3 542.6 376.3 544.7 376.1 C546.8 375.9 550.0 374.0 551.5 371.2 C553.0 368.5 552.4 362.8 553.5 359.5 C554.6 356.2 556.3 353.2 558.4 351.7 C560.5 350.2 563.6 350.2 566.2 350.7 C568.8 351.2 572.0 352.3 574.0 354.6 C576.0 356.9 577.1 360.3 577.9 364.4 C578.7 368.5 578.6 373.3 578.9 379.0 C579.2 384.7 579.3 393.4 579.8 398.6 C580.3 403.8 581.6 408.1 582.0 410.0"/><path fill="none" stroke="#0000ff" stroke-width="6.2" stroke-linejoin="round" stroke-linecap="round" d="M582.0 410.0 C582.8 411.7 585.0 417.2 587.0 420.0 C589.0 422.8 590.9 425.5 594.0 427.0 C597.1 428.5 601.9 428.8 605.5 429.0 C609.1 429.2 611.7 428.1 615.6 428.4 C619.5 428.7 625.1 430.4 629.0 431.0 C632.9 431.6 636.2 433.3 639.0 432.3 C641.8 431.3 644.4 429.8 646.0 425.0 C647.6 420.2 647.7 409.4 648.4 403.4 C649.1 397.4 647.6 392.4 650.0 389.0 C652.4 385.6 658.1 383.5 662.5 383.0 C666.9 382.5 673.0 383.6 676.6 386.2 C680.2 388.9 681.5 395.3 684.4 398.8 C687.3 402.2 690.5 407.0 693.8 407.0 C697.0 407.0 701.3 402.8 704.0 399.0 C706.7 395.2 707.2 388.5 710.0 384.0 C712.8 379.5 717.0 374.2 720.8 372.0 C724.6 369.8 729.4 370.1 733.0 370.8 C736.6 371.5 739.3 373.7 742.4 376.2 C745.5 378.7 748.3 383.8 751.6 386.0 C754.9 388.2 758.3 389.3 762.4 389.3 C766.5 389.3 774.0 386.7 776.3 386.2"/><path fill="none" stroke="#0000ff" stroke-width="5.4" stroke-linejoin="round" stroke-linecap="round" d="M776.3 386.2 C778.3 385.1 782.0 384.0 788.6 379.3 C795.2 374.6 807.5 363.8 816.2 358.0 C824.9 352.2 832.9 348.4 840.6 344.7 C848.3 341.0 854.8 339.9 862.5 336.0 C870.2 332.1 879.7 325.8 887.0 321.5 C894.3 317.2 900.0 313.1 906.5 310.5 C913.0 307.9 920.3 305.4 926.0 305.6 C931.7 305.8 935.0 307.8 940.7 311.7 C946.4 315.6 953.7 322.7 960.2 328.8 C966.7 334.9 972.7 343.4 979.7 348.4 C986.7 353.4 998.3 357.2 1002.0 359.0"/><path fill="none" stroke="#0000ff" stroke-width="5" stroke-linejoin="round" stroke-linecap="round" d="M588.0 428.0 C587.2 429.7 583.7 434.5 583.0 438.0 C582.3 441.5 582.5 446.8 584.0 449.0 C585.5 451.2 589.3 451.3 592.0 451.0 C594.7 450.7 598.7 447.7 600.0 447.0"/><path fill="none" stroke="#0000ff" stroke-width="4" stroke-linejoin="round" stroke-linecap="round" d="M646.0 431.0 C647.0 432.2 649.0 436.2 652.0 438.0 C655.0 439.8 660.7 442.7 664.0 442.0 C667.3 441.3 670.2 438.0 672.0 434.0 C673.8 430.0 673.8 422.5 675.0 418.0 C676.2 413.5 678.3 408.8 679.0 407.0"/><path fill="none" stroke="#0000ff" stroke-width="6" stroke-linejoin="round" stroke-linecap="round" d="M469.0 366.0 C471.3 365.8 478.1 364.6 482.8 364.5 C487.5 364.4 494.6 365.3 497.0 365.5"/><path fill="none" stroke="#0000ff" stroke-width="3" stroke-linejoin="round" stroke-linecap="round" d="M507.0 375.0 C508.3 374.5 512.2 372.7 515.0 372.0 C517.8 371.3 521.2 370.8 524.0 371.0 C526.8 371.2 530.7 372.7 532.0 373.0"/><path fill="none" stroke="#0000ff" stroke-width="2" stroke-linejoin="round" stroke-linecap="round" d="M629.0 369.0 C630.2 371.3 633.3 377.8 636.0 383.0 C638.7 388.2 643.5 397.2 645.0 400.0"/><path fill="none" stroke="#0000ff" stroke-width="2" stroke-linejoin="round" stroke-linecap="round" d="M720.0 398.0 C721.3 399.2 725.5 402.5 728.0 405.0 C730.5 407.5 733.8 411.7 735.0 413.0"/><path fill="none" stroke="#0000ff" stroke-width="2" stroke-linejoin="round" stroke-linecap="round" d="M746.0 394.0 C746.5 395.3 748.0 399.2 749.0 402.0 C750.0 404.8 751.5 409.5 752.0 411.0"/><path fill="none" stroke="#0000ff" stroke-width="2" stroke-linejoin="round" stroke-linecap="round" d="M612.0 388.0 C613.0 390.0 615.0 397.0 618.0 400.0 C621.0 403.0 628.0 405.0 630.0 406.0"/><path fill="none" stroke="#0000ff" stroke-width="2" stroke-linejoin="round" stroke-linecap="round" d="M690.0 378.0 C691.7 380.3 696.3 389.0 700.0 392.0 C703.7 395.0 710.0 395.3 712.0 396.0"/><rect x="525" y="334" width="1" height="1" fill="#0000ff"/><rect x="565" y="336" width="1" height="1" fill="#0000ff"/><rect x="476" y="343" width="1" height="1" fill="#0000ff"/><rect x="478" y="348" width="1" height="1" fill="#0000ff"/><rect x="479" y="350" width="1" height="1" fill="#0000ff"/><rect x="546" y="351" width="1" height="1" fill="#0000ff"/><rect x="542" y="353" width="1" height="1" fill="#0000ff"/><rect x="546" y="354" width="1" height="1" fill="#0000ff"/><rect x="547" y="355" width="1" height="1" fill="#0000ff"/><rect x="542" y="356" width="1" height="1" fill="#0000ff"/><rect x="541" y="357" width="1" height="1" fill="#0000ff"/><rect x="544" y="357" width="1" height="1" fill="#0000ff"/><rect x="550" y="357" width="1" height="1" fill="#0000ff"/><rect x="539" y="358" width="1" height="1" fill="#0000ff"/><rect x="486" y="359" width="1" height="1" fill="#0000ff"/><rect x="539" y="360" width="1" height="1" fill="#0000ff"/><rect x="549" y="360" width="1" height="1" fill="#0000ff"/><rect x="482" y="361" width="1" height="1" fill="#0000ff"/><rect x="586" y="361" width="1" height="1" fill="#0000ff"/><rect x="540" y="364" width="1" height="1" fill="#0000ff"/><rect x="639" y="364" width="1" height="1" fill="#0000ff"/><rect x="642" y="364" width="1" height="1" fill="#0000ff"/><rect x="546" y="365" width="1" height="1" fill="#0000ff"/><rect x="547" y="365" width="1" height="1" fill="#0000ff"/><rect x="644" y="365" width="1" height="1" fill="#0000ff"/><rect x="481" y="366" width="1" height="1" fill="#0000ff"/><rect x="482" y="366" width="1" height="1" fill="#0000ff"/><rect x="538" y="366" width="1" height="1" fill="#0000ff"/><rect x="593" y="366" width="1" height="1" fill="#0000ff"/><rect x="634" y="366" width="1" height="1" fill="#0000ff"/><rect x="645" y="366" width="1" height="1" fill="#0000ff"/><rect x="485" y="367" width="1" height="1" fill="#0000ff"/><rect x="497" y="367" width="1" height="1" fill="#0000ff"/><rect x="581" y="367" width="1" height="1" fill="#0000ff"/><rect x="593" y="367" width="1" height="1" fill="#0000ff"/><rect x="484" y="368" width="1" height="1" fill="#0000ff"/><rect x="567" y="368" width="1" height="1" fill="#0000ff"/><rect x="631" y="368" width="1" height="1" fill="#0000ff"/><rect x="634" y="368" width="1" height="1" fill="#0000ff"/><rect x="638" y="368" width="1" height="1" fill="#0000ff"/><rect x="477" y="369" width="1" height="1" fill="#0000ff"/><rect x="485" y="369" width="1" height="1" fill="#0000ff"/><rect x="545" y="369" width="1" height="1" fill="#0000ff"/><rect x="565" y="369" width="1" height="1" fill="#0000ff"/><rect x="478" y="370" width="1" height="1" fill="#0000ff"/><rect x="490" y="370" width="1" height="1" fill="#0000ff"/><rect x="546" y="370" width="1" height="1" fill="#0000ff"/><rect x="586" y="370" width="1" height="1" fill="#0000ff"/><rect x="590" y="370" width="1" height="1" fill="#0000ff"/><rect x="594" y="370" width="1" height="1" fill="#0000ff"/><rect x="488" y="371" width="1" height="1" fill="#0000ff"/><rect x="489" y="371" width="1" height="1" fill="#0000ff"/><rect x="494" y="371" width="1" height="1" fill="#0000ff"/><rect x="567" y="371" width="1" height="1" fill="#0000ff"/><rect x="586" y="371" width="1" height="1" fill="#0000ff"/><rect x="634" y="371" width="1" height="1" fill="#0000ff"/><rect x="636" y="371" width="1" height="1" fill="#0000ff"/><rect x="646" y="371" width="1" height="1" fill="#0000ff"/><rect x="475" y="372" width="1" height="1" fill="#0000ff"/><rect x="485" y="372" width="1" height="1" fill="#0000ff"/><rect x="486" y="372" width="1" height="1" fill="#0000ff"/><rect x="593" y="372" width="1" height="1" fill="#0000ff"/><rect x="635" y="372" width="1" height="1" fill="#0000ff"/><rect x="636" y="372" width="1" height="1" fill="#0000ff"/><rect x="641" y="372" width="1" height="1" fill="#0000ff"/><rect x="472" y="373" width="1" height="1" fill="#0000ff"/><rect x="474" y="373" width="1" height="1" fill="#0000ff"/><rect x="479" y="373" width="1" height="1" fill="#0000ff"/><rect x="480" y="373" width="1" height="1" fill="#0000ff"/><rect x="485" y="373" width="1" height="1" fill="#0000ff"/><rect x="489" y="373" width="1" height="1" fill="#0000ff"/><rect x="560" y="373" width="1" height="1" fill="#0000ff"/><rect x="576" y="373" width="1" height="1" fill="#0000ff"/><rect x="588" y="373" width="1" height="1" fill="#0000ff"/><rect x="637" y="373" width="1" height="1" fill="#0000ff"/><rect x="641" y="373" width="1" height="1" fill="#0000ff"/><rect x="642" y="373" width="1" height="1" fill="#0000ff"/><rect x="701" y="373" width="1" height="1" fill="#0000ff"/><rect x="480" y="374" width="1" height="1" fill="#0000ff"/><rect x="482" y="374" width="1" height="1" fill="#0000ff"/><rect x="483" y="374" width="1" height="1" fill="#0000ff"/><rect x="510" y="374" width="1" height="1" fill="#0000ff"/><rect x="515" y="374" width="1" height="1" fill="#0000ff"/><rect x="564" y="374" width="1" height="1" fill="#0000ff"/><rect x="585" y="374" width="1" height="1" fill="#0000ff"/><rect x="586" y="374" width="1" height="1" fill="#0000ff"/><rect x="631" y="374" width="1" height="1" fill="#0000ff"/><rect x="472" y="375" width="1" height="1" fill="#0000ff"/><rect x="477" y="375" width="1" height="1" fill="#0000ff"/><rect x="480" y="375" width="1" height="1" fill="#0000ff"/><rect x="481" y="375" width="1" height="1" fill="#0000ff"/><rect x="486" y="375" width="1" height="1" fill="#0000ff"/><rect x="492" y="375" width="1" height="1" fill="#0000ff"/><rect x="493" y="375" width="1" height="1" fill="#0000ff"/><rect x="495" y="375" width="1" height="1" fill="#0000ff"/><rect x="515" y="375" width="1" height="1" fill="#0000ff"/><rect x="559" y="375" width="1" height="1" fill="#0000ff"/><rect x="587" y="375" width="1" height="1" fill="#0000ff"/><rect x="589" y="375" width="1" height="1" fill="#0000ff"/><rect x="637" y="375" width="1" height="1" fill="#0000ff"/><rect x="481" y="376" width="1" height="1" fill="#0000ff"/><rect x="483" y="376" width="1" height="1" fill="#0000ff"/><rect x="487" y="376" width="1" height="1" fill="#0000ff"/><rect x="488" y="376" width="1" height="1" fill="#0000ff"/><rect x="491" y="376" width="1" height="1" fill="#0000ff"/><rect x="567" y="376" width="1" height="1" fill="#0000ff"/><rect x="572" y="376" width="1" height="1" fill="#0000ff"/><rect x="586" y="376" width="1" height="1" fill="#0000ff"/><rect x="642" y="376" width="1" height="1" fill="#0000ff"/><rect x="692" y="376" width="1" height="1" fill="#0000ff"/><rect x="478" y="377" width="1" height="1" fill="#0000ff"/><rect x="479" y="377" width="1" height="1" fill="#0000ff"/><rect x="481" y="377" width="1" height="1" fill="#0000ff"/><rect x="484" y="377" width="1" height="1" fill="#0000ff"/><rect x="566" y="377" width="1" height="1" fill="#0000ff"/><rect x="573" y="377" width="1" height="1" fill="#0000ff"/><rect x="642" y="377" width="1" height="1" fill="#0000ff"/><rect x="696" y="377" width="1" height="1" fill="#0000ff"/><rect x="699" y="377" width="1" height="1" fill="#0000ff"/><rect x="480" y="378" width="1" height="1" fill="#0000ff"/><rect x="482" y="378" width="1" height="1" fill="#0000ff"/><rect x="483" y="378" width="1" height="1" fill="#0000ff"/><rect x="552" y="378" width="1" height="1" fill="#0000ff"/><rect x="560" y="378" width="1" height="1" fill="#0000ff"/><rect x="567" y="378" width="1" height="1" fill="#0000ff"/><rect x="591" y="378" width="1" height="1" fill="#0000ff"/><rect x="629" y="378" width="1" height="1" fill="#0000ff"/><rect x="470" y="379" width="1" height="1" fill="#0000ff"/><rect x="472" y="379" width="1" height="1" fill="#0000ff"/><rect x="516" y="379" width="1" height="1" fill="#0000ff"/><rect x="585" y="379" width="1" height="1" fill="#0000ff"/><rect x="586" y="379" width="1" height="1" fill="#0000ff"/><rect x="645" y="379" width="1" height="1" fill="#0000ff"/><rect x="702" y="379" width="1" height="1" fill="#0000ff"/><rect x="479" y="380" width="1" height="1" fill="#0000ff"/><rect x="482" y="380" width="1" height="1" fill="#0000ff"/><rect x="483" y="380" width="1" height="1" fill="#0000ff"/><rect x="487" y="380" width="1" height="1" fill="#0000ff"/><rect x="491" y="380" width="1" height="1" fill="#0000ff"/><rect x="500" y="380" width="1" height="1" fill="#0000ff"/><rect x="503" y="380" width="1" height="1" fill="#0000ff"/><rect x="567" y="380" width="1" height="1" fill="#0000ff"/><rect x="583" y="380" width="1" height="1" fill="#0000ff"/><rect x="598" y="380" width="1" height="1" fill="#0000ff"/><rect x="641" y="380" width="1" height="1" fill="#0000ff"/><rect x="705" y="380" width="1" height="1" fill="#0000ff"/><rect x="483" y="381" width="1" height="1" fill="#0000ff"/><rect x="486" y="381" width="1" height="1" fill="#0000ff"/><rect x="574" y="381" width="1" height="1" fill="#0000ff"/><rect x="594" y="381" width="1" height="1" fill="#0000ff"/><rect x="690" y="381" width="1" height="1" fill="#0000ff"/><rect x="692" y="381" width="1" height="1" fill="#0000ff"/><rect x="711" y="381" width="1" height="1" fill="#0000ff"/><rect x="475" y="382" width="1" height="1" fill="#0000ff"/><rect x="485" y="382" width="1" height="1" fill="#0000ff"/><rect x="487" y="382" width="1" height="1" fill="#0000ff"/><rect x="558" y="382" width="1" height="1" fill="#0000ff"/><rect x="560" y="382" width="1" height="1" fill="#0000ff"/><rect x="701" y="382" width="1" height="1" fill="#0000ff"/><rect x="703" y="382" width="1" height="1" fill="#0000ff"/><rect x="705" y="382" width="1" height="1" fill="#0000ff"/><rect x="706" y="382" width="1" height="1" fill="#0000ff"/><rect x="474" y="383" width="1" height="1" fill="#0000ff"/><rect x="479" y="383" width="1" height="1" fill="#0000ff"/><rect x="482" y="383" width="1" height="1" fill="#0000ff"/><rect x="486" y="383" width="1" height="1" fill="#0000ff"/><rect x="488" y="383" width="1" height="1" fill="#0000ff"/><rect x="500" y="383" width="1" height="1" fill="#0000ff"/><rect x="561" y="383" width="1" height="1" fill="#0000ff"/><rect x="692" y="383" width="1" height="1" fill="#0000ff"/><rect x="704" y="383" width="1" height="1" fill="#0000ff"/><rect x="483" y="384" width="1" height="1" fill="#0000ff"/><rect x="484" y="384" width="1" height="1" fill="#0000ff"/><rect x="488" y="384" width="1" height="1" fill="#0000ff"/><rect x="489" y="384" width="1" height="1" fill="#0000ff"/><rect x="490" y="384" width="1" height="1" fill="#0000ff"/><rect x="510" y="384" width="1" height="1" fill="#0000ff"/><rect x="556" y="384" width="1" height="1" fill="#0000ff"/><rect x="564" y="384" width="1" height="1" fill="#0000ff"/><rect x="584" y="384" width="1" height="1" fill="#0000ff"/><rect x="668" y="384" width="1" height="1" fill="#0000ff"/><rect x="696" y="384" width="1" height="1" fill="#0000ff"/><rect x="704" y="384" width="1" height="1" fill="#0000ff"/><rect x="737" y="384" width="1" height="1" fill="#0000ff"/><rect x="471" y="385" width="1" height="1" fill="#0000ff"/><rect x="481" y="385" width="1" height="1" fill="#0000ff"/><rect x="489" y="385" width="1" height="1" fill="#0000ff"/><rect x="554" y="385" width="1" height="1" fill="#0000ff"/><rect x="558" y="385" width="1" height="1" fill="#0000ff"/><rect x="570" y="385" width="1" height="1" fill="#0000ff"/><rect x="572" y="385" width="1" height="1" fill="#0000ff"/><rect x="573" y="385" width="1" height="1" fill="#0000ff"/><rect x="666" y="385" width="1" height="1" fill="#0000ff"/><rect x="673" y="385" width="1" height="1" fill="#0000ff"/><rect x="677" y="385" width="1" height="1" fill="#0000ff"/><rect x="709" y="385" width="1" height="1" fill="#0000ff"/><rect x="737" y="385" width="1" height="1" fill="#0000ff"/><rect x="475" y="386" width="1" height="1" fill="#0000ff"/><rect x="478" y="386" width="1" height="1" fill="#0000ff"/><rect x="487" y="386" width="1" height="1" fill="#0000ff"/><rect x="488" y="386" width="1" height="1" fill="#0000ff"/><rect x="502" y="386" width="1" height="1" fill="#0000ff"/><rect x="534" y="386" width="1" height="1" fill="#0000ff"/><rect x="561" y="386" width="1" height="1" fill="#0000ff"/><rect x="566" y="386" width="1" height="1" fill="#0000ff"/><rect x="574" y="386" width="1" height="1" fill="#0000ff"/><rect x="585" y="386" width="1" height="1" fill="#0000ff"/><rect x="589" y="386" width="1" height="1" fill="#0000ff"/><rect x="590" y="386" width="1" height="1" fill="#0000ff"/><rect x="655" y="386" width="1" height="1" fill="#0000ff"/><rect x="661" y="386" width="1" height="1" fill="#0000ff"/><rect x="694" y="386" width="1" height="1" fill="#0000ff"/><rect x="695" y="386" width="1" height="1" fill="#0000ff"/><rect x="699" y="386" width="1" height="1" fill="#0000ff"/><rect x="709" y="386" width="1" height="1" fill="#0000ff"/><rect x="718" y="386" width="1" height="1" fill="#0000ff"/><rect x="733" y="386" width="1" height="1" fill="#0000ff"/><rect x="736" y="386" width="1" height="1" fill="#0000ff"/><rect x="473" y="387" width="1" height="1" fill="#0000ff"/><rect x="479" y="387" width="1" height="1" fill="#0000ff"/><rect x="483" y="387" width="1" height="1" fill="#0000ff"/><rect x="488" y="387" width="1" height="1" fill="#0000ff"/><rect x="559" y="387" width="1" height="1" fill="#0000ff"/><rect x="568" y="387" width="1" height="1" fill="#0000ff"/><rect x="575" y="387" width="1" height="1" fill="#0000ff"/><rect x="592" y="387" width="1" height="1" fill="#0000ff"/><rect x="708" y="387" width="1" height="1" fill="#0000ff"/><rect x="482" y="388" width="1" height="1" fill="#0000ff"/><rect x="483" y="388" width="1" height="1" fill="#0000ff"/><rect x="562" y="388" width="1" height="1" fill="#0000ff"/><rect x="569" y="388" width="1" height="1" fill="#0000ff"/><rect x="570" y="388" width="1" height="1" fill="#0000ff"/><rect x="591" y="388" width="1" height="1" fill="#0000ff"/><rect x="693" y="388" width="1" height="1" fill="#0000ff"/><rect x="694" y="388" width="1" height="1" fill="#0000ff"/><rect x="736" y="388" width="1" height="1" fill="#0000ff"/><rect x="480" y="389" width="1" height="1" fill="#0000ff"/><rect x="484" y="389" width="1" height="1" fill="#0000ff"/><rect x="571" y="389" width="1" height="1" fill="#0000ff"/><rect x="628" y="389" width="1" height="1" fill="#0000ff"/><rect x="680" y="389" width="1" height="1" fill="#0000ff"/><rect x="702" y="389" width="1" height="1" fill="#0000ff"/><rect x="707" y="389" width="1" height="1" fill="#0000ff"/><rect x="727" y="389" width="1" height="1" fill="#0000ff"/><rect x="735" y="389" width="1" height="1" fill="#0000ff"/><rect x="489" y="390" width="1" height="1" fill="#0000ff"/><rect x="529" y="390" width="1" height="1" fill="#0000ff"/><rect x="557" y="390" width="1" height="1" fill="#0000ff"/><rect x="687" y="390" width="1" height="1" fill="#0000ff"/><rect x="698" y="390" width="1" height="1" fill="#0000ff"/><rect x="701" y="390" width="1" height="1" fill="#0000ff"/><rect x="709" y="390" width="1" height="1" fill="#0000ff"/><rect x="731" y="390" width="1" height="1" fill="#0000ff"/><rect x="470" y="391" width="1" height="1" fill="#0000ff"/><rect x="490" y="391" width="1" height="1" fill="#0000ff"/><rect x="537" y="391" width="1" height="1" fill="#0000ff"/><rect x="544" y="391" width="1" height="1" fill="#0000ff"/><rect x="588" y="391" width="1" height="1" fill="#0000ff"/><rect x="665" y="391" width="1" height="1" fill="#0000ff"/><rect x="701" y="391" width="1" height="1" fill="#0000ff"/><rect x="703" y="391" width="1" height="1" fill="#0000ff"/><rect x="704" y="391" width="1" height="1" fill="#0000ff"/><rect x="706" y="391" width="1" height="1" fill="#0000ff"/><rect x="726" y="391" width="1" height="1" fill="#0000ff"/><rect x="752" y="391" width="1" height="1" fill="#0000ff"/><rect x="476" y="392" width="1" height="1" fill="#0000ff"/><rect x="526" y="392" width="1" height="1" fill="#0000ff"/><rect x="563" y="392" width="1" height="1" fill="#0000ff"/><rect x="570" y="392" width="1" height="1" fill="#0000ff"/><rect x="574" y="392" width="1" height="1" fill="#0000ff"/><rect x="594" y="392" width="1" height="1" fill="#0000ff"/><rect x="597" y="392" width="1" height="1" fill="#0000ff"/><rect x="600" y="392" width="1" height="1" fill="#0000ff"/><rect x="627" y="392" width="1" height="1" fill="#0000ff"/><rect x="661" y="392" width="1" height="1" fill="#0000ff"/><rect x="662" y="392" width="1" height="1" fill="#0000ff"/><rect x="663" y="392" width="1" height="1" fill="#0000ff"/><rect x="669" y="392" width="1" height="1" fill="#0000ff"/><rect x="678" y="392" width="1" height="1" fill="#0000ff"/><rect x="702" y="392" width="1" height="1" fill="#0000ff"/><rect x="734" y="392" width="1" height="1" fill="#0000ff"/><rect x="738" y="392" width="1" height="1" fill="#0000ff"/><rect x="471" y="393" width="1" height="1" fill="#0000ff"/><rect x="560" y="393" width="1" height="1" fill="#0000ff"/><rect x="628" y="393" width="1" height="1" fill="#0000ff"/><rect x="650" y="393" width="1" height="1" fill="#0000ff"/><rect x="668" y="393" width="1" height="1" fill="#0000ff"/><rect x="669" y="393" width="1" height="1" fill="#0000ff"/><rect x="671" y="393" width="1" height="1" fill="#0000ff"/><rect x="677" y="393" width="1" height="1" fill="#0000ff"/><rect x="695" y="393" width="1" height="1" fill="#0000ff"/><rect x="699" y="393" width="1" height="1" fill="#0000ff"/><rect x="717" y="393" width="1" height="1" fill="#0000ff"/><rect x="522" y="394" width="1" height="1" fill="#0000ff"/><rect x="525" y="394" width="1" height="1" fill="#0000ff"/><rect x="527" y="394" width="1" height="1" fill="#0000ff"/><rect x="569" y="394" width="1" height="1" fill="#0000ff"/><rect x="597" y="394" width="1" height="1" fill="#0000ff"/><rect x="663" y="394" width="1" height="1" fill="#0000ff"/><rect x="666" y="394" width="1" height="1" fill="#0000ff"/><rect x="695" y="394" width="1" height="1" fill="#0000ff"/><rect x="713" y="394" width="1" height="1" fill="#0000ff"/><rect x="720" y="394" width="1" height="1" fill="#0000ff"/><rect x="725" y="394" width="1" height="1" fill="#0000ff"/><rect x="734" y="394" width="1" height="1" fill="#0000ff"/><rect x="737" y="394" width="1" height="1" fill="#0000ff"/><rect x="738" y="394" width="1" height="1" fill="#0000ff"/><rect x="743" y="394" width="1" height="1" fill="#0000ff"/><rect x="746" y="394" width="1" height="1" fill="#0000ff"/><rect x="482" y="395" width="1" height="1" fill="#0000ff"/><rect x="488" y="395" width="1" height="1" fill="#0000ff"/><rect x="520" y="395" width="1" height="1" fill="#0000ff"/><rect x="525" y="395" width="1" height="1" fill="#0000ff"/><rect x="579" y="395" width="1" height="1" fill="#0000ff"/><rect x="584" y="395" width="1" height="1" fill="#0000ff"/><rect x="594" y="395" width="1" height="1" fill="#0000ff"/><rect x="625" y="395" width="1" height="1" fill="#0000ff"/><rect x="629" y="395" width="1" height="1" fill="#0000ff"/><rect x="633" y="395" width="1" height="1" fill="#0000ff"/><rect x="640" y="395" width="1" height="1" fill="#0000ff"/><rect x="659" y="395" width="1" height="1" fill="#0000ff"/><rect x="666" y="395" width="1" height="1" fill="#0000ff"/><rect x="682" y="395" width="1" height="1" fill="#0000ff"/><rect x="703" y="395" width="1" height="1" fill="#0000ff"/><rect x="725" y="395" width="1" height="1" fill="#0000ff"/><rect x="732" y="395" width="1" height="1" fill="#0000ff"/><rect x="738" y="395" width="1" height="1" fill="#0000ff"/><rect x="741" y="395" width="1" height="1" fill="#0000ff"/><rect x="746" y="395" width="1" height="1" fill="#0000ff"/><rect x="494" y="396" width="1" height="1" fill="#0000ff"/><rect x="508" y="396" width="1" height="1" fill="#0000ff"/><rect x="525" y="396" width="1" height="1" fill="#0000ff"/><rect x="531" y="396" width="1" height="1" fill="#0000ff"/><rect x="590" y="396" width="1" height="1" fill="#0000ff"/><rect x="660" y="396" width="1" height="1" fill="#0000ff"/><rect x="665" y="396" width="1" height="1" fill="#0000ff"/><rect x="673" y="396" width="1" height="1" fill="#0000ff"/><rect x="684" y="396" width="1" height="1" fill="#0000ff"/><rect x="697" y="396" width="1" height="1" fill="#0000ff"/><rect x="717" y="396" width="1" height="1" fill="#0000ff"/><rect x="735" y="396" width="1" height="1" fill="#0000ff"/><rect x="755" y="396" width="1" height="1" fill="#0000ff"/><rect x="483" y="397" width="1" height="1" fill="#0000ff"/><rect x="490" y="397" width="1" height="1" fill="#0000ff"/><rect x="517" y="397" width="1" height="1" fill="#0000ff"/><rect x="627" y="397" width="1" height="1" fill="#0000ff"/><rect x="665" y="397" width="1" height="1" fill="#0000ff"/><rect x="670" y="397" width="1" height="1" fill="#0000ff"/><rect x="671" y="397" width="1" height="1" fill="#0000ff"/><rect x="682" y="397" width="1" height="1" fill="#0000ff"/><rect x="683" y="397" width="1" height="1" fill="#0000ff"/><rect x="719" y="397" width="1" height="1" fill="#0000ff"/><rect x="726" y="397" width="1" height="1" fill="#0000ff"/><rect x="728" y="397" width="1" height="1" fill="#0000ff"/><rect x="729" y="397" width="1" height="1" fill="#0000ff"/><rect x="748" y="397" width="1" height="1" fill="#0000ff"/><rect x="481" y="398" width="1" height="1" fill="#0000ff"/><rect x="486" y="398" width="1" height="1" fill="#0000ff"/><rect x="493" y="398" width="1" height="1" fill="#0000ff"/><rect x="522" y="398" width="1" height="1" fill="#0000ff"/><rect x="595" y="398" width="1" height="1" fill="#0000ff"/><rect x="622" y="398" width="1" height="1" fill="#0000ff"/><rect x="636" y="398" width="1" height="1" fill="#0000ff"/><rect x="674" y="398" width="1" height="1" fill="#0000ff"/><rect x="675" y="398" width="1" height="1" fill="#0000ff"/><rect x="697" y="398" width="1" height="1" fill="#0000ff"/><rect x="700" y="398" width="1" height="1" fill="#0000ff"/><rect x="711" y="398" width="1" height="1" fill="#0000ff"/><rect x="723" y="398" width="1" height="1" fill="#0000ff"/><rect x="737" y="398" width="1" height="1" fill="#0000ff"/><rect x="485" y="399" width="1" height="1" fill="#0000ff"/><rect x="506" y="399" width="1" height="1" fill="#0000ff"/><rect x="513" y="399" width="1" height="1" fill="#0000ff"/><rect x="529" y="399" width="1" height="1" fill="#0000ff"/><rect x="579" y="399" width="1" height="1" fill="#0000ff"/><rect x="626" y="399" width="1" height="1" fill="#0000ff"/><rect x="627" y="399" width="1" height="1" fill="#0000ff"/><rect x="630" y="399" width="1" height="1" fill="#0000ff"/><rect x="665" y="399" width="1" height="1" fill="#0000ff"/><rect x="675" y="399" width="1" height="1" fill="#0000ff"/><rect x="696" y="399" width="1" height="1" fill="#0000ff"/><rect x="713" y="399" width="1" height="1" fill="#0000ff"/><rect x="724" y="399" width="1" height="1" fill="#0000ff"/><rect x="731" y="399" width="1" height="1" fill="#0000ff"/><rect x="747" y="399" width="1" height="1" fill="#0000ff"/><rect x="480" y="400" width="1" height="1" fill="#0000ff"/><rect x="483" y="400" width="1" height="1" fill="#0000ff"/><rect x="585" y="400" width="1" height="1" fill="#0000ff"/><rect x="592" y="400" width="1" height="1" fill="#0000ff"/><rect x="665" y="400" width="1" height="1" fill="#0000ff"/><rect x="677" y="400" width="1" height="1" fill="#0000ff"/><rect x="714" y="400" width="1" height="1" fill="#0000ff"/><rect x="744" y="400" width="1" height="1" fill="#0000ff"/><rect x="747" y="400" width="1" height="1" fill="#0000ff"/><rect x="748" y="400" width="1" height="1" fill="#0000ff"/><rect x="751" y="400" width="1" height="1" fill="#0000ff"/><rect x="501" y="401" width="1" height="1" fill="#0000ff"/><rect x="518" y="401" width="1" height="1" fill="#0000ff"/><rect x="635" y="401" width="1" height="1" fill="#0000ff"/><rect x="640" y="401" width="1" height="1" fill="#0000ff"/><rect x="665" y="401" width="1" height="1" fill="#0000ff"/><rect x="668" y="401" width="1" height="1" fill="#0000ff"/><rect x="729" y="401" width="1" height="1" fill="#0000ff"/><rect x="736" y="401" width="1" height="1" fill="#0000ff"/><rect x="749" y="401" width="1" height="1" fill="#0000ff"/><rect x="753" y="401" width="1" height="1" fill="#0000ff"/><rect x="498" y="402" width="1" height="1" fill="#0000ff"/><rect x="624" y="402" width="1" height="1" fill="#0000ff"/><rect x="655" y="402" width="1" height="1" fill="#0000ff"/><rect x="657" y="402" width="1" height="1" fill="#0000ff"/><rect x="662" y="402" width="1" height="1" fill="#0000ff"/><rect x="664" y="402" width="1" height="1" fill="#0000ff"/><rect x="670" y="402" width="1" height="1" fill="#0000ff"/><rect x="675" y="402" width="1" height="1" fill="#0000ff"/><rect x="679" y="402" width="1" height="1" fill="#0000ff"/><rect x="517" y="403" width="1" height="1" fill="#0000ff"/><rect x="634" y="403" width="1" height="1" fill="#0000ff"/><rect x="665" y="403" width="1" height="1" fill="#0000ff"/><rect x="666" y="403" width="1" height="1" fill="#0000ff"/><rect x="671" y="403" width="1" height="1" fill="#0000ff"/><rect x="728" y="403" width="1" height="1" fill="#0000ff"/><rect x="498" y="404" width="1" height="1" fill="#0000ff"/><rect x="501" y="404" width="1" height="1" fill="#0000ff"/><rect x="505" y="404" width="1" height="1" fill="#0000ff"/><rect x="506" y="404" width="1" height="1" fill="#0000ff"/><rect x="514" y="404" width="1" height="1" fill="#0000ff"/><rect x="608" y="404" width="1" height="1" fill="#0000ff"/><rect x="623" y="404" width="1" height="1" fill="#0000ff"/><rect x="625" y="404" width="1" height="1" fill="#0000ff"/><rect x="630" y="404" width="1" height="1" fill="#0000ff"/><rect x="632" y="404" width="1" height="1" fill="#0000ff"/><rect x="654" y="404" width="1" height="1" fill="#0000ff"/><rect x="657" y="404" width="1" height="1" fill="#0000ff"/><rect x="663" y="404" width="1" height="1" fill="#0000ff"/><rect x="665" y="404" width="1" height="1" fill="#0000ff"/><rect x="666" y="404" width="1" height="1" fill="#0000ff"/><rect x="670" y="404" width="1" height="1" fill="#0000ff"/><rect x="671" y="404" width="1" height="1" fill="#0000ff"/><rect x="675" y="404" width="1" height="1" fill="#0000ff"/><rect x="682" y="404" width="1" height="1" fill="#0000ff"/><rect x="711" y="404" width="1" height="1" fill="#0000ff"/><rect x="719" y="404" width="1" height="1" fill="#0000ff"/><rect x="722" y="404" width="1" height="1" fill="#0000ff"/><rect x="731" y="404" width="1" height="1" fill="#0000ff"/><rect x="732" y="404" width="1" height="1" fill="#0000ff"/><rect x="741" y="404" width="1" height="1" fill="#0000ff"/><rect x="744" y="404" width="1" height="1" fill="#0000ff"/><rect x="496" y="405" width="1" height="1" fill="#0000ff"/><rect x="498" y="405" width="1" height="1" fill="#0000ff"/><rect x="504" y="405" width="1" height="1" fill="#0000ff"/><rect x="510" y="405" width="1" height="1" fill="#0000ff"/><rect x="617" y="405" width="1" height="1" fill="#0000ff"/><rect x="626" y="405" width="1" height="1" fill="#0000ff"/><rect x="629" y="405" width="1" height="1" fill="#0000ff"/><rect x="668" y="405" width="1" height="1" fill="#0000ff"/><rect x="677" y="405" width="1" height="1" fill="#0000ff"/><rect x="684" y="405" width="1" height="1" fill="#0000ff"/><rect x="719" y="405" width="1" height="1" fill="#0000ff"/><rect x="723" y="405" width="1" height="1" fill="#0000ff"/><rect x="724" y="405" width="1" height="1" fill="#0000ff"/><rect x="734" y="405" width="1" height="1" fill="#0000ff"/><rect x="738" y="405" width="1" height="1" fill="#0000ff"/><rect x="756" y="405" width="1" height="1" fill="#0000ff"/><rect x="494" y="406" width="1" height="1" fill="#0000ff"/><rect x="499" y="406" width="1" height="1" fill="#0000ff"/><rect x="505" y="406" width="1" height="1" fill="#0000ff"/><rect x="506" y="406" width="1" height="1" fill="#0000ff"/><rect x="589" y="406" width="1" height="1" fill="#0000ff"/><rect x="600" y="406" width="1" height="1" fill="#0000ff"/><rect x="615" y="406" width="1" height="1" fill="#0000ff"/><rect x="622" y="406" width="1" height="1" fill="#0000ff"/><rect x="626" y="406" width="1" height="1" fill="#0000ff"/><rect x="633" y="406" width="1" height="1" fill="#0000ff"/><rect x="654" y="406" width="1" height="1" fill="#0000ff"/><rect x="664" y="406" width="1" height="1" fill="#0000ff"/><rect x="669" y="406" width="1" height="1" fill="#0000ff"/><rect x="676" y="406" width="1" height="1" fill="#0000ff"/><rect x="716" y="406" width="1" height="1" fill="#0000ff"/><rect x="721" y="406" width="1" height="1" fill="#0000ff"/><rect x="750" y="406" width="1" height="1" fill="#0000ff"/><rect x="497" y="407" width="1" height="1" fill="#0000ff"/><rect x="590" y="407" width="1" height="1" fill="#0000ff"/><rect x="599" y="407" width="1" height="1" fill="#0000ff"/><rect x="636" y="407" width="1" height="1" fill="#0000ff"/><rect x="637" y="407" width="1" height="1" fill="#0000ff"/><rect x="642" y="407" width="1" height="1" fill="#0000ff"/><rect x="652" y="407" width="1" height="1" fill="#0000ff"/><rect x="669" y="407" width="1" height="1" fill="#0000ff"/><rect x="493" y="408" width="1" height="1" fill="#0000ff"/><rect x="499" y="408" width="1" height="1" fill="#0000ff"/><rect x="503" y="408" width="1" height="1" fill="#0000ff"/><rect x="504" y="408" width="1" height="1" fill="#0000ff"/><rect x="505" y="408" width="1" height="1" fill="#0000ff"/><rect x="506" y="408" width="1" height="1" fill="#0000ff"/><rect x="509" y="408" width="1" height="1" fill="#0000ff"/><rect x="586" y="408" width="1" height="1" fill="#0000ff"/><rect x="592" y="408" width="1" height="1" fill="#0000ff"/><rect x="623" y="408" width="1" height="1" fill="#0000ff"/><rect x="625" y="408" width="1" height="1" fill="#0000ff"/><rect x="627" y="408" width="1" height="1" fill="#0000ff"/><rect x="629" y="408" width="1" height="1" fill="#0000ff"/><rect x="633" y="408" width="1" height="1" fill="#0000ff"/><rect x="634" y="408" width="1" height="1" fill="#0000ff"/><rect x="642" y="408" width="1" height="1" fill="#0000ff"/><rect x="651" y="408" width="1" height="1" fill="#0000ff"/><rect x="666" y="408" width="1" height="1" fill="#0000ff"/><rect x="669" y="408" width="1" height="1" fill="#0000ff"/><rect x="675" y="408" width="1" height="1" fill="#0000ff"/><rect x="688" y="408" width="1" height="1" fill="#0000ff"/><rect x="510" y="409" width="1" height="1" fill="#0000ff"/><rect x="593" y="409" width="1" height="1" fill="#0000ff"/><rect x="611" y="409" width="1" height="1" fill="#0000ff"/><rect x="616" y="409" width="1" height="1" fill="#0000ff"/><rect x="644" y="409" width="1" height="1" fill="#0000ff"/><rect x="645" y="409" width="1" height="1" fill="#0000ff"/><rect x="656" y="409" width="1" height="1" fill="#0000ff"/><rect x="658" y="409" width="1" height="1" fill="#0000ff"/><rect x="668" y="409" width="1" height="1" fill="#0000ff"/><rect x="673" y="409" width="1" height="1" fill="#0000ff"/><rect x="681" y="409" width="1" height="1" fill="#0000ff"/><rect x="497" y="410" width="1" height="1" fill="#0000ff"/><rect x="503" y="410" width="1" height="1" fill="#0000ff"/><rect x="504" y="410" width="1" height="1" fill="#0000ff"/><rect x="512" y="410" width="1" height="1" fill="#0000ff"/><rect x="618" y="410" width="1" height="1" fill="#0000ff"/><rect x="619" y="410" width="1" height="1" fill="#0000ff"/><rect x="630" y="410" width="1" height="1" fill="#0000ff"/><rect x="643" y="410" width="1" height="1" fill="#0000ff"/><rect x="663" y="410" width="1" height="1" fill="#0000ff"/><rect x="673" y="410" width="1" height="1" fill="#0000ff"/><rect x="674" y="410" width="1" height="1" fill="#0000ff"/><rect x="723" y="410" width="1" height="1" fill="#0000ff"/><rect x="729" y="410" width="1" height="1" fill="#0000ff"/><rect x="736" y="410" width="1" height="1" fill="#0000ff"/><rect x="739" y="410" width="1" height="1" fill="#0000ff"/><rect x="505" y="411" width="1" height="1" fill="#0000ff"/><rect x="516" y="411" width="1" height="1" fill="#0000ff"/><rect x="587" y="411" width="1" height="1" fill="#0000ff"/><rect x="613" y="411" width="1" height="1" fill="#0000ff"/><rect x="621" y="411" width="1" height="1" fill="#0000ff"/><rect x="627" y="411" width="1" height="1" fill="#0000ff"/><rect x="631" y="411" width="1" height="1" fill="#0000ff"/><rect x="662" y="411" width="1" height="1" fill="#0000ff"/><rect x="664" y="411" width="1" height="1" fill="#0000ff"/><rect x="675" y="411" width="1" height="1" fill="#0000ff"/><rect x="676" y="411" width="1" height="1" fill="#0000ff"/><rect x="682" y="411" width="1" height="1" fill="#0000ff"/><rect x="730" y="411" width="1" height="1" fill="#0000ff"/><rect x="510" y="412" width="1" height="1" fill="#0000ff"/><rect x="511" y="412" width="1" height="1" fill="#0000ff"/><rect x="512" y="412" width="1" height="1" fill="#0000ff"/><rect x="515" y="412" width="1" height="1" fill="#0000ff"/><rect x="589" y="412" width="1" height="1" fill="#0000ff"/><rect x="594" y="412" width="1" height="1" fill="#0000ff"/><rect x="625" y="412" width="1" height="1" fill="#0000ff"/><rect x="665" y="412" width="1" height="1" fill="#0000ff"/><rect x="674" y="412" width="1" height="1" fill="#0000ff"/><rect x="675" y="412" width="1" height="1" fill="#0000ff"/><rect x="676" y="412" width="1" height="1" fill="#0000ff"/><rect x="716" y="412" width="1" height="1" fill="#0000ff"/><rect x="493" y="413" width="1" height="1" fill="#0000ff"/><rect x="609" y="413" width="1" height="1" fill="#0000ff"/><rect x="612" y="413" width="1" height="1" fill="#0000ff"/><rect x="622" y="413" width="1" height="1" fill="#0000ff"/><rect x="625" y="413" width="1" height="1" fill="#0000ff"/><rect x="628" y="413" width="1" height="1" fill="#0000ff"/><rect x="667" y="413" width="1" height="1" fill="#0000ff"/><rect x="675" y="413" width="1" height="1" fill="#0000ff"/><rect x="725" y="413" width="1" height="1" fill="#0000ff"/><rect x="507" y="414" width="1" height="1" fill="#0000ff"/><rect x="616" y="414" width="1" height="1" fill="#0000ff"/><rect x="626" y="414" width="1" height="1" fill="#0000ff"/><rect x="630" y="414" width="1" height="1" fill="#0000ff"/><rect x="711" y="414" width="1" height="1" fill="#0000ff"/><rect x="725" y="414" width="1" height="1" fill="#0000ff"/><rect x="747" y="414" width="1" height="1" fill="#0000ff"/><rect x="504" y="415" width="1" height="1" fill="#0000ff"/><rect x="511" y="415" width="1" height="1" fill="#0000ff"/><rect x="587" y="415" width="1" height="1" fill="#0000ff"/><rect x="592" y="415" width="1" height="1" fill="#0000ff"/><rect x="599" y="415" width="1" height="1" fill="#0000ff"/><rect x="619" y="415" width="1" height="1" fill="#0000ff"/><rect x="630" y="415" width="1" height="1" fill="#0000ff"/><rect x="631" y="415" width="1" height="1" fill="#0000ff"/><rect x="632" y="415" width="1" height="1" fill="#0000ff"/><rect x="634" y="415" width="1" height="1" fill="#0000ff"/><rect x="665" y="415" width="1" height="1" fill="#0000ff"/><rect x="678" y="415" width="1" height="1" fill="#0000ff"/><rect x="502" y="416" width="1" height="1" fill="#0000ff"/><rect x="506" y="416" width="1" height="1" fill="#0000ff"/><rect x="510" y="416" width="1" height="1" fill="#0000ff"/><rect x="581" y="416" width="1" height="1" fill="#0000ff"/><rect x="586" y="416" width="1" height="1" fill="#0000ff"/><rect x="616" y="416" width="1" height="1" fill="#0000ff"/><rect x="619" y="416" width="1" height="1" fill="#0000ff"/><rect x="630" y="416" width="1" height="1" fill="#0000ff"/><rect x="668" y="416" width="1" height="1" fill="#0000ff"/><rect x="672" y="416" width="1" height="1" fill="#0000ff"/><rect x="676" y="416" width="1" height="1" fill="#0000ff"/><rect x="609" y="417" width="1" height="1" fill="#0000ff"/><rect x="639" y="417" width="1" height="1" fill="#0000ff"/><rect x="667" y="417" width="1" height="1" fill="#0000ff"/><rect x="673" y="417" width="1" height="1" fill="#0000ff"/><rect x="616" y="418" width="1" height="1" fill="#0000ff"/><rect x="621" y="418" width="1" height="1" fill="#0000ff"/><rect x="627" y="418" width="1" height="1" fill="#0000ff"/><rect x="630" y="418" width="1" height="1" fill="#0000ff"/><rect x="663" y="418" width="1" height="1" fill="#0000ff"/><rect x="664" y="418" width="1" height="1" fill="#0000ff"/><rect x="665" y="418" width="1" height="1" fill="#0000ff"/><rect x="666" y="418" width="1" height="1" fill="#0000ff"/><rect x="503" y="419" width="1" height="1" fill="#0000ff"/><rect x="621" y="419" width="1" height="1" fill="#0000ff"/><rect x="629" y="419" width="1" height="1" fill="#0000ff"/><rect x="664" y="419" width="1" height="1" fill="#0000ff"/><rect x="615" y="420" width="1" height="1" fill="#0000ff"/><rect x="621" y="420" width="1" height="1" fill="#0000ff"/><rect x="631" y="420" width="1" height="1" fill="#0000ff"/><rect x="633" y="420" width="1" height="1" fill="#0000ff"/><rect x="668" y="420" width="1" height="1" fill="#0000ff"/><rect x="671" y="421" width="1" height="1" fill="#0000ff"/><rect x="501" y="422" width="1" height="1" fill="#0000ff"/><rect x="607" y="422" width="1" height="1" fill="#0000ff"/><rect x="617" y="422" width="1" height="1" fill="#0000ff"/><rect x="623" y="422" width="1" height="1" fill="#0000ff"/><rect x="663" y="422" width="1" height="1" fill="#0000ff"/><rect x="666" y="422" width="1" height="1" fill="#0000ff"/><rect x="615" y="423" width="1" height="1" fill="#0000ff"/><rect x="670" y="423" width="1" height="1" fill="#0000ff"/><rect x="613" y="424" width="1" height="1" fill="#0000ff"/><rect x="616" y="424" width="1" height="1" fill="#0000ff"/><rect x="675" y="424" width="1" height="1" fill="#0000ff"/><rect x="588" y="425" width="1" height="1" fill="#0000ff"/><rect x="589" y="425" width="1" height="1" fill="#0000ff"/><rect x="635" y="425" width="1" height="1" fill="#0000ff"/><rect x="659" y="425" width="1" height="1" fill="#0000ff"/><rect x="662" y="425" width="1" height="1" fill="#0000ff"/><rect x="611" y="426" width="1" height="1" fill="#0000ff"/><rect x="631" y="426" width="1" height="1" fill="#0000ff"/><rect x="640" y="426" width="1" height="1" fill="#0000ff"/><rect x="660" y="426" width="1" height="1" fill="#0000ff"/><rect x="662" y="426" width="1" height="1" fill="#0000ff"/><rect x="622" y="429" width="1" height="1" fill="#0000ff"/><rect x="669" y="430" width="1" height="1" fill="#0000ff"/><rect x="623" y="431" width="1" height="1" fill="#0000ff"/><rect x="595" y="440" width="1" height="1" fill="#0000ff"/><rect x="595" y="441" width="1" height="1" fill="#0000ff"/><rect x="586" y="442" width="1" height="1" fill="#0000ff"/><rect x="595" y="442" width="1" height="1" fill="#0000ff"/><rect x="583" y="443" width="1" height="1" fill="#0000ff"/><rect x="584" y="443" width="1" height="1" fill="#0000ff"/><rect x="585" y="443" width="1" height="1" fill="#0000ff"/><rect x="589" y="443" width="1" height="1" fill="#0000ff"/><rect x="592" y="443" width="1" height="1" fill="#0000ff"/><rect x="593" y="443" width="1" height="1" fill="#0000ff"/><rect x="590" y="444" width="1" height="1" fill="#0000ff"/><rect x="593" y="444" width="1" height="1" fill="#0000ff"/><rect x="583" y="445" width="1" height="1" fill="#0000ff"/><rect x="592" y="445" width="1" height="1" fill="#0000ff"/><rect x="599" y="445" width="1" height="1" fill="#0000ff"/><rect x="580" y="446" width="1" height="1" fill="#0000ff"/><rect x="583" y="446" width="1" height="1" fill="#0000ff"/><rect x="588" y="446" width="1" height="1" fill="#0000ff"/><rect x="591" y="446" width="1" height="1" fill="#0000ff"/><rect x="594" y="446" width="1" height="1" fill="#0000ff"/><rect x="595" y="446" width="1" height="1" fill="#0000ff"/><rect x="582" y="447" width="1" height="1" fill="#0000ff"/><rect x="586" y="447" width="1" height="1" fill="#0000ff"/><rect x="588" y="447" width="1" height="1" fill="#0000ff"/><rect x="587" y="448" width="1" height="1" fill="#0000ff"/><rect x="590" y="448" width="1" height="1" fill="#0000ff"/><rect x="603" y="448" width="1" height="1" fill="#0000ff"/><rect x="586" y="449" width="1" height="1" fill="#0000ff"/><rect x="588" y="449" width="1" height="1" fill="#0000ff"/><rect x="594" y="449" width="1" height="1" fill="#0000ff"/><rect x="596" y="449" width="1" height="1" fill="#0000ff"/><rect x="598" y="449" width="1" height="1" fill="#0000ff"/><rect x="587" y="450" width="1" height="1" fill="#0000ff"/><rect x="595" y="450" width="1" height="1" fill="#0000ff"/><rect x="590" y="451" width="1" height="1" fill="#0000ff"/><rect x="591" y="451" width="1" height="1" fill="#0000ff"/><rect x="552" y="330" width="2" height="2" fill="#0000ff"/><rect x="520" y="332" width="2" height="2" fill="#0000ff"/><rect x="564" y="332" width="2" height="2" fill="#0000ff"/><rect x="570" y="332" width="2" height="2" fill="#0000ff"/><rect x="532" y="334" width="2" height="2" fill="#0000ff"/><rect x="536" y="334" width="2" height="2" fill="#0000ff"/><rect x="554" y="334" width="4" height="2" fill="#0000ff"/><rect x="522" y="336" width="2" height="2" fill="#0000ff"/><rect x="526" y="336" width="2" height="2" fill="#0000ff"/><rect x="560" y="336" width="2" height="2" fill="#0000ff"/><rect x="480" y="338" width="2" height="2" fill="#0000ff"/><rect x="560" y="340" width="2" height="2" fill="#0000ff"/><rect x="478" y="346" width="2" height="2" fill="#0000ff"/><rect x="484" y="346" width="4" height="2" fill="#0000ff"/><rect x="548" y="346" width="2" height="2" fill="#0000ff"/><rect x="544" y="348" width="2" height="2" fill="#0000ff"/><rect x="544" y="350" width="2" height="2" fill="#0000ff"/><rect x="544" y="352" width="2" height="2" fill="#0000ff"/><rect x="538" y="354" width="4" height="2" fill="#0000ff"/><rect x="548" y="354" width="2" height="2" fill="#0000ff"/><rect x="538" y="356" width="2" height="2" fill="#0000ff"/><rect x="542" y="356" width="2" height="2" fill="#0000ff"/><rect x="540" y="358" width="2" height="2" fill="#0000ff"/><rect x="582" y="358" width="2" height="2" fill="#0000ff"/><rect x="586" y="358" width="2" height="2" fill="#0000ff"/><rect x="594" y="358" width="2" height="2" fill="#0000ff"/><rect x="480" y="360" width="2" height="2" fill="#0000ff"/><rect x="538" y="360" width="8" height="2" fill="#0000ff"/><rect x="582" y="360" width="4" height="2" fill="#0000ff"/><rect x="590" y="360" width="2" height="2" fill="#0000ff"/><rect x="638" y="360" width="2" height="2" fill="#0000ff"/><rect x="642" y="360" width="2" height="2" fill="#0000ff"/><rect x="470" y="362" width="2" height="2" fill="#0000ff"/><rect x="482" y="362" width="2" height="2" fill="#0000ff"/><rect x="486" y="362" width="2" height="2" fill="#0000ff"/><rect x="498" y="362" width="2" height="2" fill="#0000ff"/><rect x="542" y="362" width="8" height="2" fill="#0000ff"/><rect x="644" y="362" width="2" height="2" fill="#0000ff"/><rect x="470" y="364" width="2" height="2" fill="#0000ff"/><rect x="476" y="364" width="6" height="2" fill="#0000ff"/><rect x="498" y="364" width="2" height="2" fill="#0000ff"/><rect x="564" y="364" width="2" height="2" fill="#0000ff"/><rect x="632" y="364" width="2" height="2" fill="#0000ff"/><rect x="638" y="364" width="2" height="2" fill="#0000ff"/><rect x="654" y="364" width="2" height="2" fill="#0000ff"/><rect x="474" y="366" width="2" height="2" fill="#0000ff"/><rect x="480" y="366" width="2" height="2" fill="#0000ff"/><rect x="544" y="366" width="2" height="2" fill="#0000ff"/><rect x="576" y="366" width="2" height="2" fill="#0000ff"/><rect x="592" y="366" width="2" height="2" fill="#0000ff"/><rect x="634" y="366" width="2" height="2" fill="#0000ff"/><rect x="640" y="366" width="4" height="2" fill="#0000ff"/><rect x="476" y="368" width="2" height="2" fill="#0000ff"/><rect x="482" y="368" width="6" height="2" fill="#0000ff"/><rect x="492" y="368" width="2" height="2" fill="#0000ff"/><rect x="542" y="368" width="2" height="2" fill="#0000ff"/><rect x="548" y="368" width="2" height="2" fill="#0000ff"/><rect x="568" y="368" width="6" height="2" fill="#0000ff"/><rect x="584" y="368" width="2" height="2" fill="#0000ff"/><rect x="592" y="368" width="2" height="2" fill="#0000ff"/><rect x="630" y="368" width="2" height="2" fill="#0000ff"/><rect x="642" y="368" width="2" height="2" fill="#0000ff"/><rect x="476" y="370" width="4" height="2" fill="#0000ff"/><rect x="482" y="370" width="2" height="2" fill="#0000ff"/><rect x="486" y="370" width="6" height="2" fill="#0000ff"/><rect x="498" y="370" width="2" height="2" fill="#0000ff"/><rect x="508" y="370" width="2" height="2" fill="#0000ff"/><rect x="518" y="370" width="2" height="2" fill="#0000ff"/><rect x="540" y="370" width="4" height="2" fill="#0000ff"/><rect x="562" y="370" width="2" height="2" fill="#0000ff"/><rect x="584" y="370" width="4" height="2" fill="#0000ff"/><rect x="590" y="370" width="2" height="2" fill="#0000ff"/><rect x="600" y="370" width="2" height="2" fill="#0000ff"/><rect x="632" y="370" width="4" height="2" fill="#0000ff"/><rect x="638" y="370" width="2" height="2" fill="#0000ff"/><rect x="642" y="370" width="2" height="2" fill="#0000ff"/><rect x="646" y="370" width="2" height="2" fill="#0000ff"/><rect x="702" y="370" width="2" height="2" fill="#0000ff"/><rect x="470" y="372" width="2" height="2" fill="#0000ff"/><rect x="474" y="372" width="12" height="2" fill="#0000ff"/><rect x="490" y="372" width="2" height="2" fill="#0000ff"/><rect x="508" y="372" width="2" height="2" fill="#0000ff"/><rect x="564" y="372" width="2" height="2" fill="#0000ff"/><rect x="586" y="372" width="4" height="2" fill="#0000ff"/><rect x="594" y="372" width="4" height="2" fill="#0000ff"/><rect x="632" y="372" width="2" height="2" fill="#0000ff"/><rect x="636" y="372" width="4" height="2" fill="#0000ff"/><rect x="642" y="372" width="4" height="2" fill="#0000ff"/><rect x="668" y="372" width="2" height="2" fill="#0000ff"/><rect x="698" y="372" width="2" height="2" fill="#0000ff"/><rect x="478" y="374" width="4" height="2" fill="#0000ff"/><rect x="484" y="374" width="8" height="2" fill="#0000ff"/><rect x="494" y="374" width="2" height="2" fill="#0000ff"/><rect x="508" y="374" width="2" height="2" fill="#0000ff"/><rect x="516" y="374" width="2" height="2" fill="#0000ff"/><rect x="554" y="374" width="2" height="2" fill="#0000ff"/><rect x="558" y="374" width="2" height="2" fill="#0000ff"/><rect x="568" y="374" width="2" height="2" fill="#0000ff"/><rect x="572" y="374" width="4" height="2" fill="#0000ff"/><rect x="590" y="374" width="2" height="2" fill="#0000ff"/><rect x="594" y="374" width="2" height="2" fill="#0000ff"/><rect x="598" y="374" width="2" height="2" fill="#0000ff"/><rect x="642" y="374" width="2" height="2" fill="#0000ff"/><rect x="648" y="374" width="4" height="2" fill="#0000ff"/><rect x="692" y="374" width="2" height="2" fill="#0000ff"/><rect x="704" y="374" width="2" height="2" fill="#0000ff"/><rect x="470" y="376" width="6" height="2" fill="#0000ff"/><rect x="478" y="376" width="10" height="2" fill="#0000ff"/><rect x="490" y="376" width="2" height="2" fill="#0000ff"/><rect x="514" y="376" width="2" height="2" fill="#0000ff"/><rect x="518" y="376" width="2" height="2" fill="#0000ff"/><rect x="560" y="376" width="2" height="2" fill="#0000ff"/><rect x="566" y="376" width="2" height="2" fill="#0000ff"/><rect x="570" y="376" width="6" height="2" fill="#0000ff"/><rect x="600" y="376" width="2" height="2" fill="#0000ff"/><rect x="638" y="376" width="2" height="2" fill="#0000ff"/><rect x="656" y="376" width="2" height="2" fill="#0000ff"/><rect x="676" y="376" width="2" height="2" fill="#0000ff"/><rect x="702" y="376" width="2" height="2" fill="#0000ff"/><rect x="470" y="378" width="4" height="2" fill="#0000ff"/><rect x="476" y="378" width="22" height="2" fill="#0000ff"/><rect x="508" y="378" width="8" height="2" fill="#0000ff"/><rect x="560" y="378" width="4" height="2" fill="#0000ff"/><rect x="566" y="378" width="6" height="2" fill="#0000ff"/><rect x="576" y="378" width="2" height="2" fill="#0000ff"/><rect x="592" y="378" width="2" height="2" fill="#0000ff"/><rect x="596" y="378" width="2" height="2" fill="#0000ff"/><rect x="632" y="378" width="2" height="2" fill="#0000ff"/><rect x="640" y="378" width="2" height="2" fill="#0000ff"/><rect x="646" y="378" width="2" height="2" fill="#0000ff"/><rect x="668" y="378" width="2" height="2" fill="#0000ff"/><rect x="698" y="378" width="2" height="2" fill="#0000ff"/><rect x="718" y="378" width="2" height="2" fill="#0000ff"/><rect x="476" y="380" width="14" height="2" fill="#0000ff"/><rect x="492" y="380" width="2" height="2" fill="#0000ff"/><rect x="556" y="380" width="2" height="2" fill="#0000ff"/><rect x="562" y="380" width="8" height="2" fill="#0000ff"/><rect x="584" y="380" width="2" height="2" fill="#0000ff"/><rect x="588" y="380" width="2" height="2" fill="#0000ff"/><rect x="592" y="380" width="4" height="2" fill="#0000ff"/><rect x="638" y="380" width="2" height="2" fill="#0000ff"/><rect x="646" y="380" width="2" height="2" fill="#0000ff"/><rect x="668" y="380" width="2" height="2" fill="#0000ff"/><rect x="696" y="380" width="2" height="2" fill="#0000ff"/><rect x="704" y="380" width="6" height="2" fill="#0000ff"/><rect x="714" y="380" width="2" height="2" fill="#0000ff"/><rect x="470" y="382" width="18" height="2" fill="#0000ff"/><rect x="490" y="382" width="2" height="2" fill="#0000ff"/><rect x="520" y="382" width="2" height="2" fill="#0000ff"/><rect x="558" y="382" width="6" height="2" fill="#0000ff"/><rect x="566" y="382" width="6" height="2" fill="#0000ff"/><rect x="574" y="382" width="2" height="2" fill="#0000ff"/><rect x="590" y="382" width="2" height="2" fill="#0000ff"/><rect x="678" y="382" width="2" height="2" fill="#0000ff"/><rect x="712" y="382" width="2" height="2" fill="#0000ff"/><rect x="720" y="382" width="2" height="2" fill="#0000ff"/><rect x="748" y="382" width="2" height="2" fill="#0000ff"/><rect x="470" y="384" width="4" height="2" fill="#0000ff"/><rect x="478" y="384" width="18" height="2" fill="#0000ff"/><rect x="498" y="384" width="2" height="2" fill="#0000ff"/><rect x="512" y="384" width="2" height="2" fill="#0000ff"/><rect x="518" y="384" width="2" height="2" fill="#0000ff"/><rect x="530" y="384" width="2" height="2" fill="#0000ff"/><rect x="552" y="384" width="2" height="2" fill="#0000ff"/><rect x="560" y="384" width="2" height="2" fill="#0000ff"/><rect x="564" y="384" width="4" height="2" fill="#0000ff"/><rect x="570" y="384" width="2" height="2" fill="#0000ff"/><rect x="574" y="384" width="2" height="2" fill="#0000ff"/><rect x="592" y="384" width="6" height="2" fill="#0000ff"/><rect x="600" y="384" width="2" height="2" fill="#0000ff"/><rect x="630" y="384" width="2" height="2" fill="#0000ff"/><rect x="666" y="384" width="2" height="2" fill="#0000ff"/><rect x="690" y="384" width="4" height="2" fill="#0000ff"/><rect x="698" y="384" width="12" height="2" fill="#0000ff"/><rect x="726" y="384" width="2" height="2" fill="#0000ff"/><rect x="730" y="384" width="2" height="2" fill="#0000ff"/><rect x="470" y="386" width="2" height="2" fill="#0000ff"/><rect x="476" y="386" width="12" height="2" fill="#0000ff"/><rect x="492" y="386" width="2" height="2" fill="#0000ff"/><rect x="496" y="386" width="2" height="2" fill="#0000ff"/><rect x="538" y="386" width="2" height="2" fill="#0000ff"/><rect x="562" y="386" width="2" height="2" fill="#0000ff"/><rect x="566" y="386" width="2" height="2" fill="#0000ff"/><rect x="572" y="386" width="2" height="2" fill="#0000ff"/><rect x="590" y="386" width="4" height="2" fill="#0000ff"/><rect x="658" y="386" width="2" height="2" fill="#0000ff"/><rect x="668" y="386" width="2" height="2" fill="#0000ff"/><rect x="672" y="386" width="2" height="2" fill="#0000ff"/><rect x="680" y="386" width="2" height="2" fill="#0000ff"/><rect x="690" y="386" width="2" height="2" fill="#0000ff"/><rect x="694" y="386" width="12" height="2" fill="#0000ff"/><rect x="724" y="386" width="4" height="2" fill="#0000ff"/><rect x="472" y="388" width="2" height="2" fill="#0000ff"/><rect x="476" y="388" width="2" height="2" fill="#0000ff"/><rect x="480" y="388" width="6" height="2" fill="#0000ff"/><rect x="488" y="388" width="6" height="2" fill="#0000ff"/><rect x="496" y="388" width="2" height="2" fill="#0000ff"/><rect x="550" y="388" width="2" height="2" fill="#0000ff"/><rect x="558" y="388" width="2" height="2" fill="#0000ff"/><rect x="564" y="388" width="2" height="2" fill="#0000ff"/><rect x="580" y="388" width="4" height="2" fill="#0000ff"/><rect x="588" y="388" width="2" height="2" fill="#0000ff"/><rect x="656" y="388" width="2" height="2" fill="#0000ff"/><rect x="670" y="388" width="2" height="2" fill="#0000ff"/><rect x="674" y="388" width="2" height="2" fill="#0000ff"/><rect x="688" y="388" width="14" height="2" fill="#0000ff"/><rect x="704" y="388" width="2" height="2" fill="#0000ff"/><rect x="724" y="388" width="2" height="2" fill="#0000ff"/><rect x="736" y="388" width="2" height="2" fill="#0000ff"/><rect x="746" y="388" width="2" height="2" fill="#0000ff"/><rect x="484" y="390" width="2" height="2" fill="#0000ff"/><rect x="498" y="390" width="4" height="2" fill="#0000ff"/><rect x="514" y="390" width="4" height="2" fill="#0000ff"/><rect x="520" y="390" width="4" height="2" fill="#0000ff"/><rect x="526" y="390" width="2" height="2" fill="#0000ff"/><rect x="554" y="390" width="2" height="2" fill="#0000ff"/><rect x="562" y="390" width="6" height="2" fill="#0000ff"/><rect x="582" y="390" width="2" height="2" fill="#0000ff"/><rect x="586" y="390" width="2" height="2" fill="#0000ff"/><rect x="658" y="390" width="4" height="2" fill="#0000ff"/><rect x="664" y="390" width="4" height="2" fill="#0000ff"/><rect x="670" y="390" width="4" height="2" fill="#0000ff"/><rect x="692" y="390" width="4" height="2" fill="#0000ff"/><rect x="698" y="390" width="4" height="2" fill="#0000ff"/><rect x="708" y="390" width="2" height="2" fill="#0000ff"/><rect x="726" y="390" width="4" height="2" fill="#0000ff"/><rect x="736" y="390" width="4" height="2" fill="#0000ff"/><rect x="478" y="392" width="2" height="2" fill="#0000ff"/><rect x="484" y="392" width="2" height="2" fill="#0000ff"/><rect x="490" y="392" width="2" height="2" fill="#0000ff"/><rect x="518" y="392" width="2" height="2" fill="#0000ff"/><rect x="528" y="392" width="2" height="2" fill="#0000ff"/><rect x="562" y="392" width="2" height="2" fill="#0000ff"/><rect x="566" y="392" width="2" height="2" fill="#0000ff"/><rect x="586" y="392" width="4" height="2" fill="#0000ff"/><rect x="592" y="392" width="4" height="2" fill="#0000ff"/><rect x="626" y="392" width="2" height="2" fill="#0000ff"/><rect x="632" y="392" width="2" height="2" fill="#0000ff"/><rect x="646" y="392" width="2" height="2" fill="#0000ff"/><rect x="662" y="392" width="2" height="2" fill="#0000ff"/><rect x="668" y="392" width="4" height="2" fill="#0000ff"/><rect x="680" y="392" width="2" height="2" fill="#0000ff"/><rect x="686" y="392" width="2" height="2" fill="#0000ff"/><rect x="692" y="392" width="4" height="2" fill="#0000ff"/><rect x="698" y="392" width="4" height="2" fill="#0000ff"/><rect x="704" y="392" width="2" height="2" fill="#0000ff"/><rect x="712" y="392" width="4" height="2" fill="#0000ff"/><rect x="718" y="392" width="2" height="2" fill="#0000ff"/><rect x="732" y="392" width="4" height="2" fill="#0000ff"/><rect x="514" y="394" width="4" height="2" fill="#0000ff"/><rect x="526" y="394" width="2" height="2" fill="#0000ff"/><rect x="538" y="394" width="2" height="2" fill="#0000ff"/><rect x="568" y="394" width="2" height="2" fill="#0000ff"/><rect x="586" y="394" width="2" height="2" fill="#0000ff"/><rect x="598" y="394" width="2" height="2" fill="#0000ff"/><rect x="624" y="394" width="2" height="2" fill="#0000ff"/><rect x="630" y="394" width="2" height="2" fill="#0000ff"/><rect x="636" y="394" width="2" height="2" fill="#0000ff"/><rect x="640" y="394" width="2" height="2" fill="#0000ff"/><rect x="656" y="394" width="4" height="2" fill="#0000ff"/><rect x="662" y="394" width="2" height="2" fill="#0000ff"/><rect x="670" y="394" width="6" height="2" fill="#0000ff"/><rect x="690" y="394" width="2" height="2" fill="#0000ff"/><rect x="694" y="394" width="6" height="2" fill="#0000ff"/><rect x="702" y="394" width="4" height="2" fill="#0000ff"/><rect x="718" y="394" width="2" height="2" fill="#0000ff"/><rect x="722" y="394" width="2" height="2" fill="#0000ff"/><rect x="726" y="394" width="2" height="2" fill="#0000ff"/><rect x="730" y="394" width="2" height="2" fill="#0000ff"/><rect x="734" y="394" width="2" height="2" fill="#0000ff"/><rect x="740" y="394" width="4" height="2" fill="#0000ff"/><rect x="474" y="396" width="2" height="2" fill="#0000ff"/><rect x="486" y="396" width="2" height="2" fill="#0000ff"/><rect x="504" y="396" width="2" height="2" fill="#0000ff"/><rect x="508" y="396" width="2" height="2" fill="#0000ff"/><rect x="558" y="396" width="4" height="2" fill="#0000ff"/><rect x="564" y="396" width="2" height="2" fill="#0000ff"/><rect x="588" y="396" width="2" height="2" fill="#0000ff"/><rect x="634" y="396" width="2" height="2" fill="#0000ff"/><rect x="646" y="396" width="2" height="2" fill="#0000ff"/><rect x="656" y="396" width="18" height="2" fill="#0000ff"/><rect x="676" y="396" width="4" height="2" fill="#0000ff"/><rect x="694" y="396" width="2" height="2" fill="#0000ff"/><rect x="702" y="396" width="2" height="2" fill="#0000ff"/><rect x="706" y="396" width="2" height="2" fill="#0000ff"/><rect x="716" y="396" width="2" height="2" fill="#0000ff"/><rect x="720" y="396" width="4" height="2" fill="#0000ff"/><rect x="726" y="396" width="4" height="2" fill="#0000ff"/><rect x="734" y="396" width="2" height="2" fill="#0000ff"/><rect x="744" y="396" width="2" height="2" fill="#0000ff"/><rect x="470" y="398" width="2" height="2" fill="#0000ff"/><rect x="480" y="398" width="2" height="2" fill="#0000ff"/><rect x="492" y="398" width="2" height="2" fill="#0000ff"/><rect x="498" y="398" width="2" height="2" fill="#0000ff"/><rect x="502" y="398" width="2" height="2" fill="#0000ff"/><rect x="512" y="398" width="2" height="2" fill="#0000ff"/><rect x="516" y="398" width="2" height="2" fill="#0000ff"/><rect x="564" y="398" width="2" height="2" fill="#0000ff"/><rect x="590" y="398" width="2" height="2" fill="#0000ff"/><rect x="594" y="398" width="2" height="2" fill="#0000ff"/><rect x="624" y="398" width="2" height="2" fill="#0000ff"/><rect x="664" y="398" width="4" height="2" fill="#0000ff"/><rect x="670" y="398" width="4" height="2" fill="#0000ff"/><rect x="676" y="398" width="2" height="2" fill="#0000ff"/><rect x="688" y="398" width="2" height="2" fill="#0000ff"/><rect x="704" y="398" width="2" height="2" fill="#0000ff"/><rect x="710" y="398" width="2" height="2" fill="#0000ff"/><rect x="716" y="398" width="2" height="2" fill="#0000ff"/><rect x="720" y="398" width="2" height="2" fill="#0000ff"/><rect x="724" y="398" width="4" height="2" fill="#0000ff"/><rect x="730" y="398" width="6" height="2" fill="#0000ff"/><rect x="738" y="398" width="4" height="2" fill="#0000ff"/><rect x="744" y="398" width="2" height="2" fill="#0000ff"/><rect x="748" y="398" width="8" height="2" fill="#0000ff"/><rect x="488" y="400" width="2" height="2" fill="#0000ff"/><rect x="512" y="400" width="2" height="2" fill="#0000ff"/><rect x="626" y="400" width="2" height="2" fill="#0000ff"/><rect x="630" y="400" width="4" height="2" fill="#0000ff"/><rect x="650" y="400" width="4" height="2" fill="#0000ff"/><rect x="658" y="400" width="2" height="2" fill="#0000ff"/><rect x="662" y="400" width="14" height="2" fill="#0000ff"/><rect x="678" y="400" width="4" height="2" fill="#0000ff"/><rect x="706" y="400" width="4" height="2" fill="#0000ff"/><rect x="712" y="400" width="2" height="2" fill="#0000ff"/><rect x="716" y="400" width="2" height="2" fill="#0000ff"/><rect x="720" y="400" width="2" height="2" fill="#0000ff"/><rect x="726" y="400" width="2" height="2" fill="#0000ff"/><rect x="732" y="400" width="10" height="2" fill="#0000ff"/><rect x="746" y="400" width="2" height="2" fill="#0000ff"/><rect x="752" y="400" width="2" height="2" fill="#0000ff"/><rect x="756" y="400" width="2" height="2" fill="#0000ff"/><rect x="480" y="402" width="2" height="2" fill="#0000ff"/><rect x="496" y="402" width="2" height="2" fill="#0000ff"/><rect x="504" y="402" width="2" height="2" fill="#0000ff"/><rect x="510" y="402" width="2" height="2" fill="#0000ff"/><rect x="514" y="402" width="2" height="2" fill="#0000ff"/><rect x="586" y="402" width="2" height="2" fill="#0000ff"/><rect x="622" y="402" width="2" height="2" fill="#0000ff"/><rect x="630" y="402" width="2" height="2" fill="#0000ff"/><rect x="636" y="402" width="4" height="2" fill="#0000ff"/><rect x="644" y="402" width="2" height="2" fill="#0000ff"/><rect x="652" y="402" width="2" height="2" fill="#0000ff"/><rect x="658" y="402" width="2" height="2" fill="#0000ff"/><rect x="664" y="402" width="6" height="2" fill="#0000ff"/><rect x="676" y="402" width="2" height="2" fill="#0000ff"/><rect x="680" y="402" width="2" height="2" fill="#0000ff"/><rect x="684" y="402" width="2" height="2" fill="#0000ff"/><rect x="704" y="402" width="2" height="2" fill="#0000ff"/><rect x="724" y="402" width="2" height="2" fill="#0000ff"/><rect x="732" y="402" width="6" height="2" fill="#0000ff"/><rect x="750" y="402" width="2" height="2" fill="#0000ff"/><rect x="496" y="404" width="2" height="2" fill="#0000ff"/><rect x="506" y="404" width="4" height="2" fill="#0000ff"/><rect x="514" y="404" width="2" height="2" fill="#0000ff"/><rect x="518" y="404" width="2" height="2" fill="#0000ff"/><rect x="582" y="404" width="4" height="2" fill="#0000ff"/><rect x="608" y="404" width="2" height="2" fill="#0000ff"/><rect x="618" y="404" width="2" height="2" fill="#0000ff"/><rect x="626" y="404" width="4" height="2" fill="#0000ff"/><rect x="632" y="404" width="2" height="2" fill="#0000ff"/><rect x="638" y="404" width="2" height="2" fill="#0000ff"/><rect x="656" y="404" width="20" height="2" fill="#0000ff"/><rect x="716" y="404" width="4" height="2" fill="#0000ff"/><rect x="722" y="404" width="2" height="2" fill="#0000ff"/><rect x="732" y="404" width="2" height="2" fill="#0000ff"/><rect x="746" y="404" width="2" height="2" fill="#0000ff"/><rect x="502" y="406" width="6" height="2" fill="#0000ff"/><rect x="510" y="406" width="2" height="2" fill="#0000ff"/><rect x="514" y="406" width="4" height="2" fill="#0000ff"/><rect x="588" y="406" width="2" height="2" fill="#0000ff"/><rect x="600" y="406" width="2" height="2" fill="#0000ff"/><rect x="606" y="406" width="2" height="2" fill="#0000ff"/><rect x="614" y="406" width="4" height="2" fill="#0000ff"/><rect x="622" y="406" width="2" height="2" fill="#0000ff"/><rect x="626" y="406" width="16" height="2" fill="#0000ff"/><rect x="658" y="406" width="18" height="2" fill="#0000ff"/><rect x="724" y="406" width="2" height="2" fill="#0000ff"/><rect x="728" y="406" width="2" height="2" fill="#0000ff"/><rect x="732" y="406" width="2" height="2" fill="#0000ff"/><rect x="738" y="406" width="2" height="2" fill="#0000ff"/><rect x="494" y="408" width="2" height="2" fill="#0000ff"/><rect x="500" y="408" width="14" height="2" fill="#0000ff"/><rect x="588" y="408" width="2" height="2" fill="#0000ff"/><rect x="592" y="408" width="2" height="2" fill="#0000ff"/><rect x="606" y="408" width="2" height="2" fill="#0000ff"/><rect x="612" y="408" width="8" height="2" fill="#0000ff"/><rect x="626" y="408" width="2" height="2" fill="#0000ff"/><rect x="632" y="408" width="2" height="2" fill="#0000ff"/><rect x="638" y="408" width="2" height="2" fill="#0000ff"/><rect x="658" y="408" width="2" height="2" fill="#0000ff"/><rect x="664" y="408" width="2" height="2" fill="#0000ff"/><rect x="668" y="408" width="2" height="2" fill="#0000ff"/><rect x="672" y="408" width="2" height="2" fill="#0000ff"/><rect x="676" y="408" width="10" height="2" fill="#0000ff"/><rect x="716" y="408" width="2" height="2" fill="#0000ff"/><rect x="726" y="408" width="2" height="2" fill="#0000ff"/><rect x="738" y="408" width="2" height="2" fill="#0000ff"/><rect x="742" y="408" width="2" height="2" fill="#0000ff"/><rect x="492" y="410" width="4" height="2" fill="#0000ff"/><rect x="504" y="410" width="4" height="2" fill="#0000ff"/><rect x="510" y="410" width="8" height="2" fill="#0000ff"/><rect x="592" y="410" width="2" height="2" fill="#0000ff"/><rect x="612" y="410" width="2" height="2" fill="#0000ff"/><rect x="618" y="410" width="2" height="2" fill="#0000ff"/><rect x="622" y="410" width="2" height="2" fill="#0000ff"/><rect x="626" y="410" width="6" height="2" fill="#0000ff"/><rect x="648" y="410" width="2" height="2" fill="#0000ff"/><rect x="654" y="410" width="2" height="2" fill="#0000ff"/><rect x="658" y="410" width="6" height="2" fill="#0000ff"/><rect x="666" y="410" width="4" height="2" fill="#0000ff"/><rect x="672" y="410" width="4" height="2" fill="#0000ff"/><rect x="680" y="410" width="2" height="2" fill="#0000ff"/><rect x="718" y="410" width="2" height="2" fill="#0000ff"/><rect x="728" y="410" width="2" height="2" fill="#0000ff"/><rect x="744" y="410" width="4" height="2" fill="#0000ff"/><rect x="494" y="412" width="2" height="2" fill="#0000ff"/><rect x="500" y="412" width="2" height="2" fill="#0000ff"/><rect x="504" y="412" width="10" height="2" fill="#0000ff"/><rect x="588" y="412" width="4" height="2" fill="#0000ff"/><rect x="606" y="412" width="2" height="2" fill="#0000ff"/><rect x="612" y="412" width="2" height="2" fill="#0000ff"/><rect x="616" y="412" width="12" height="2" fill="#0000ff"/><rect x="630" y="412" width="4" height="2" fill="#0000ff"/><rect x="650" y="412" width="2" height="2" fill="#0000ff"/><rect x="660" y="412" width="4" height="2" fill="#0000ff"/><rect x="668" y="412" width="2" height="2" fill="#0000ff"/><rect x="672" y="412" width="2" height="2" fill="#0000ff"/><rect x="724" y="412" width="4" height="2" fill="#0000ff"/><rect x="500" y="414" width="2" height="2" fill="#0000ff"/><rect x="506" y="414" width="8" height="2" fill="#0000ff"/><rect x="582" y="414" width="2" height="2" fill="#0000ff"/><rect x="600" y="414" width="2" height="2" fill="#0000ff"/><rect x="618" y="414" width="6" height="2" fill="#0000ff"/><rect x="630" y="414" width="4" height="2" fill="#0000ff"/><rect x="636" y="414" width="2" height="2" fill="#0000ff"/><rect x="644" y="414" width="2" height="2" fill="#0000ff"/><rect x="656" y="414" width="2" height="2" fill="#0000ff"/><rect x="678" y="414" width="4" height="2" fill="#0000ff"/><rect x="684" y="414" width="2" height="2" fill="#0000ff"/><rect x="498" y="416" width="2" height="2" fill="#0000ff"/><rect x="502" y="416" width="4" height="2" fill="#0000ff"/><rect x="508" y="416" width="2" height="2" fill="#0000ff"/><rect x="586" y="416" width="2" height="2" fill="#0000ff"/><rect x="594" y="416" width="2" height="2" fill="#0000ff"/><rect x="616" y="416" width="4" height="2" fill="#0000ff"/><rect x="622" y="416" width="2" height="2" fill="#0000ff"/><rect x="628" y="416" width="4" height="2" fill="#0000ff"/><rect x="664" y="416" width="2" height="2" fill="#0000ff"/><rect x="668" y="416" width="2" height="2" fill="#0000ff"/><rect x="584" y="418" width="4" height="2" fill="#0000ff"/><rect x="592" y="418" width="2" height="2" fill="#0000ff"/><rect x="614" y="418" width="4" height="2" fill="#0000ff"/><rect x="622" y="418" width="2" height="2" fill="#0000ff"/><rect x="626" y="418" width="2" height="2" fill="#0000ff"/><rect x="634" y="418" width="4" height="2" fill="#0000ff"/><rect x="656" y="418" width="2" height="2" fill="#0000ff"/><rect x="662" y="418" width="4" height="2" fill="#0000ff"/><rect x="678" y="418" width="2" height="2" fill="#0000ff"/><rect x="714" y="418" width="2" height="2" fill="#0000ff"/><rect x="490" y="420" width="2" height="2" fill="#0000ff"/><rect x="576" y="420" width="2" height="2" fill="#0000ff"/><rect x="608" y="420" width="4" height="2" fill="#0000ff"/><rect x="616" y="420" width="4" height="2" fill="#0000ff"/><rect x="626" y="420" width="2" height="2" fill="#0000ff"/><rect x="642" y="420" width="4" height="2" fill="#0000ff"/><rect x="666" y="420" width="2" height="2" fill="#0000ff"/><rect x="494" y="422" width="2" height="2" fill="#0000ff"/><rect x="606" y="422" width="6" height="2" fill="#0000ff"/><rect x="626" y="422" width="2" height="2" fill="#0000ff"/><rect x="634" y="422" width="2" height="2" fill="#0000ff"/><rect x="642" y="422" width="2" height="2" fill="#0000ff"/><rect x="646" y="422" width="2" height="2" fill="#0000ff"/><rect x="658" y="422" width="2" height="2" fill="#0000ff"/><rect x="664" y="422" width="4" height="2" fill="#0000ff"/><rect x="670" y="422" width="2" height="2" fill="#0000ff"/><rect x="674" y="422" width="2" height="2" fill="#0000ff"/><rect x="684" y="422" width="2" height="2" fill="#0000ff"/><rect x="590" y="424" width="2" height="2" fill="#0000ff"/><rect x="622" y="424" width="2" height="2" fill="#0000ff"/><rect x="646" y="424" width="2" height="2" fill="#0000ff"/><rect x="670" y="424" width="2" height="2" fill="#0000ff"/><rect x="674" y="424" width="2" height="2" fill="#0000ff"/><rect x="640" y="426" width="2" height="2" fill="#0000ff"/><rect x="670" y="426" width="2" height="2" fill="#0000ff"/><rect x="614" y="428" width="2" height="2" fill="#0000ff"/><rect x="620" y="428" width="2" height="2" fill="#0000ff"/><rect x="672" y="428" width="2" height="2" fill="#0000ff"/><rect x="622" y="430" width="2" height="2" fill="#0000ff"/><rect x="628" y="432" width="2" height="2" fill="#0000ff"/><rect x="660" y="432" width="2" height="2" fill="#0000ff"/><rect x="582" y="440" width="2" height="2" fill="#0000ff"/><rect x="588" y="440" width="2" height="2" fill="#0000ff"/><rect x="588" y="442" width="2" height="2" fill="#0000ff"/><rect x="592" y="442" width="2" height="2" fill="#0000ff"/><rect x="598" y="442" width="4" height="2" fill="#0000ff"/><rect x="580" y="444" width="2" height="2" fill="#0000ff"/><rect x="586" y="444" width="12" height="2" fill="#0000ff"/><rect x="580" y="446" width="16" height="2" fill="#0000ff"/><rect x="598" y="446" width="2" height="2" fill="#0000ff"/><rect x="602" y="446" width="2" height="2" fill="#0000ff"/><rect x="582" y="448" width="14" height="2" fill="#0000ff"/><rect x="582" y="450" width="2" height="2" fill="#0000ff"/><rect x="586" y="450" width="6" height="2" fill="#0000ff"/><rect x="596" y="450" width="2" height="2" fill="#0000ff"/><rect x="596" y="452" width="2" height="2" fill="#0000ff"/><path fill="#0000ff" d="M521 399 C520 412 513 421 503 422 L500 415 C506 410 510 404 513 399 Z"/></g></svg>
<div style="position:absolute;left:1000px;top:118px;width:17px;height:546px;background:#eeede5"></div>
<div style="position:absolute;left:1000px;top:134px;width:16px;height:512px;box-sizing:border-box;border:1px solid;border-color:#f4f3ee #716f64 #716f64 #f4f3ee;background:#ECE9D8;box-shadow:inset -1px -1px 0 #aca899"></div>
<div style="position:absolute;left:1000px;top:118px;width:16px;height:17px;box-sizing:border-box;border:1px solid;border-color:#f4f3ee #716f64 #716f64 #f4f3ee;background:#ECE9D8;box-shadow:inset -1px -1px 0 #aca899, inset 1px 1px 0 #fff"></div>
<svg style="position:absolute;left:1000px;top:118px;" width="16" height="17" viewBox="0 0 16 17"><path d="M4 10 H12 L8 6 Z" fill="#000"/></svg>
<div style="position:absolute;left:1000px;top:646px;width:16px;height:17px;box-sizing:border-box;border:1px solid;border-color:#f4f3ee #716f64 #716f64 #f4f3ee;background:#ECE9D8;box-shadow:inset -1px -1px 0 #aca899, inset 1px 1px 0 #fff"></div>
<svg style="position:absolute;left:1000px;top:646px;" width="16" height="17" viewBox="0 0 16 17"><path d="M4 6 H12 L8 10 Z" fill="#000"/></svg>
<div style="position:absolute;left:470px;top:664px;width:530px;height:17px;background:#eeede5"></div>
<div style="position:absolute;left:470px;top:664px;width:75px;height:17px;background:#fff"></div>
<svg style="position:absolute;left:470px;top:664px;" width="75" height="17" viewBox="0 0 75 17"><circle cx="8" cy="8.5" r="4.5" fill="#1c58c8"/><path d="M5 7 Q8 5 10 8 Q8 11 6 10Z" fill="#2a9a3a"/><path d="M17 4.5 H21 L23 6.5 V12 H17 Z" fill="#fff" stroke="#333" stroke-width="1"/><line x1="29.5" y1="4" x2="29.5" y2="13" stroke="#aaa"/><path d="M36 6.5 A3.5 3.5 0 0 1 42 7 M42 10 A3.5 3.5 0 0 1 36 10" fill="none" stroke="#333" stroke-width="1.3"/><path d="M48 6 V11 M51 6 V11" stroke="#333" stroke-width="1.5"/></svg>
<div style="position:absolute;left:545px;top:664px;width:17px;height:17px;box-sizing:border-box;border:1px solid;border-color:#f4f3ee #716f64 #716f64 #f4f3ee;background:#ECE9D8;box-shadow:inset -1px -1px 0 #aca899, inset 1px 1px 0 #fff"></div>
<svg style="position:absolute;left:545px;top:664px;" width="17" height="17" viewBox="0 0 17 17"><path d="M10 4 V12 L6 8 Z" fill="#000"/></svg>
<div style="position:absolute;left:589px;top:664px;width:294px;height:17px;box-sizing:border-box;border:1px solid;border-color:#f4f3ee #716f64 #716f64 #f4f3ee;background:#ECE9D8;box-shadow:inset -1px -1px 0 #aca899"></div>
<div style="position:absolute;left:984px;top:664px;width:16px;height:17px;box-sizing:border-box;border:1px solid;border-color:#f4f3ee #716f64 #716f64 #f4f3ee;background:#ECE9D8;box-shadow:inset -1px -1px 0 #aca899, inset 1px 1px 0 #fff"></div>
<svg style="position:absolute;left:984px;top:664px;" width="16" height="17" viewBox="0 0 16 17"><path d="M6 4 V12 L10 8 Z" fill="#000"/></svg>
<div style="position:absolute;left:1000px;top:664px;width:17px;height:17px;background:#fff"></div>
<div style="position:absolute;left:1017px;top:117px;width:1px;height:565px;background:#ECE9D8"></div>
<div style="position:absolute;left:5px;top:682px;width:1013px;height:29px;background:#ECE9D8"></div>
<div style="position:absolute;left:5px;top:682px;width:1013px;height:1px;background:#fff"></div>
<div style="position:absolute;left:6px;top:686px;width:1px;height:22px;background:#fff"></div>
<div style="position:absolute;left:7px;top:686px;width:2px;height:22px;background:#c9c6b6"></div>
<div class="t" style="left:15.7px;top:691.04px;font-size:11px;color:#1c1c1c;font-weight:normal;letter-spacing:-0.3px;"><u>D</u>rawing</div>
<svg style="position:absolute;left:60px;top:693px;" width="9" height="5" viewBox="0 0 9 5"><path d="M0.5 0 H8 L4.25 4 Z" fill="#000"/></svg>
<svg style="position:absolute;left:76px;top:686px;" width="14" height="18" viewBox="0 0 14 18"><path d="M2 1 V15 L5.5 11.5 L8.5 17 L11 15.5 L8 10.5 H13 Z" fill="#000"/></svg>
<svg style="position:absolute;left:95px;top:686px;" width="18" height="18" viewBox="0 0 18 18"><circle cx="9" cy="9" r="6" fill="none" stroke="#b8b5a6" stroke-width="1.3" stroke-dasharray="26 6"/><circle cx="9" cy="9" r="1.5" fill="#b8b5a6"/></svg>
<svg style="position:absolute;left:119px;top:686px;" width="18" height="18" viewBox="0 0 18 18"><rect x="7" y="2" width="9" height="9" fill="none" stroke="#b8b5a6" stroke-dasharray="2 1"/><circle cx="6" cy="11" r="4" fill="#ECE9D8" stroke="#b8b5a6" stroke-width="1.2"/><path d="M9 14 L13 17" stroke="#b8b5a6" stroke-width="1.5"/></svg>
<div style="position:absolute;left:143px;top:686px;width:1px;height:22px;background:#ACA899"></div>
<div style="position:absolute;left:144px;top:686px;width:1px;height:22px;background:#fff"></div>
<div style="position:absolute;left:146px;top:685px;width:25px;height:23px;background:#f2f1e8;box-sizing:border-box;border:1px solid;border-color:#fff #c8c5b5 #c8c5b5 #fff"></div>
<div style="position:absolute;left:152px;top:688px;width:13px;height:14px;box-sizing:border-box;border:1.4px solid #000;background:#fff"></div>
<div style="position:absolute;left:172px;top:685px;width:12px;height:23px;background:#f2f1e8;box-sizing:border-box;border:1px solid;border-color:#fff #c8c5b5 #c8c5b5 #fff"></div>
<svg style="position:absolute;left:172px;top:693px;" width="12" height="5" viewBox="0 0 12 5"><path d="M2 0 H10 L6 4 Z" fill="#000"/></svg>
<div class="t" style="left:194px;top:687.62px;font-size:17px;color:#1c1c1c;font-weight:bold;font-family:'Liberation Serif',serif;">A</div>
<svg style="position:absolute;left:217px;top:693px;" width="9" height="5" viewBox="0 0 9 5"><path d="M0.5 0 H8 L4.25 4 Z" fill="#000"/></svg>
<svg style="position:absolute;left:234px;top:686px;" width="18" height="18" viewBox="0 0 18 18"><path d="M2 14 L6 4 L15 3 L16 13 Z" fill="none" stroke="#b8b5a6" stroke-width="1.2"/><rect x="1" y="12" width="3" height="3" fill="#b8b5a6"/><rect x="14" y="2" width="3" height="3" fill="#b8b5a6"/></svg>
<div style="position:absolute;left:257px;top:686px;width:1px;height:22px;background:#ACA899"></div>
<div style="position:absolute;left:258px;top:686px;width:1px;height:22px;background:#fff"></div>
<div style="position:absolute;left:263px;top:686px;width:166px;height:19px;box-sizing:border-box;border:1px solid;border-color:#9c9a8c #fff #fff #9c9a8c;background:#fff"></div>
<div style="position:absolute;left:264px;top:687px;width:164px;height:17px;box-sizing:border-box;border:1px solid;border-color:#716f64 #f4f3ee #f4f3ee #716f64;"></div>
<svg style="position:absolute;left:265px;top:688px;" width="15" height="15" viewBox="0 0 15 15"><path d="M1.5 1.5 H10 L13.5 5 V13.5 H1.5 Z" fill="#dbe8f8" stroke="#6d8fc8"/><text x="7.5" y="11.5" font-family="Liberation Serif" font-style="italic" font-weight="bold" font-size="10" fill="#1a7a2a" text-anchor="middle">O</text></svg>
<div class="t" style="left:282px;top:689.59px;font-size:11.5px;color:#1c1c1c;font-weight:normal;letter-spacing:-0.3px;">Arial</div>
<div style="position:absolute;left:412px;top:688px;width:16px;height:15px;box-sizing:border-box;border:1px solid;border-color:#fff #716f64 #716f64 #fff;background:#ECE9D8"></div>
<svg style="position:absolute;left:412px;top:688px;" width="16" height="15" viewBox="0 0 16 15"><path d="M4.5 6 H11.5 L8 10 Z" fill="#000"/></svg>
<div style="position:absolute;left:437px;top:686px;width:42px;height:19px;box-sizing:border-box;border:1px solid;border-color:#9c9a8c #fff #fff #9c9a8c;background:#fff"></div>
<div style="position:absolute;left:438px;top:687px;width:40px;height:17px;box-sizing:border-box;border:1px solid;border-color:#716f64 #f4f3ee #f4f3ee #716f64;"></div>
<div class="t" style="left:440px;top:689.59px;font-size:11.5px;color:#1c1c1c;font-weight:normal;letter-spacing:-0.3px;">10</div>
<div style="position:absolute;left:463px;top:688px;width:15px;height:15px;box-sizing:border-box;border:1px solid;border-color:#fff #716f64 #716f64 #fff;background:#ECE9D8"></div>
<svg style="position:absolute;left:463px;top:688px;" width="15" height="15" viewBox="0 0 15 15"><path d="M4 6 H11 L7.5 10 Z" fill="#000"/></svg>
<div class="t" style="left:494.5px;top:690.24px;font-size:13px;color:#1c1c1c;font-weight:bold;font-family:'Liberation Serif',serif;">B</div>
<div class="t" style="left:518px;top:690.24px;font-size:13px;color:#1c1c1c;font-weight:bold;font-family:'Liberation Serif',serif;font-style:italic;">I</div>
<div class="t" style="left:541.5px;top:690.14px;font-size:12px;color:#1c1c1c;font-weight:bold;font-family:'Liberation Serif',serif;">U</div>
<div style="position:absolute;left:541.5px;top:703px;width:9px;height:1.3px;background:#000"></div>
<div style="position:absolute;left:560px;top:686px;width:1px;height:22px;background:#ACA899"></div>
<div style="position:absolute;left:561px;top:686px;width:1px;height:22px;background:#fff"></div>
<div class="t" style="left:568px;top:685.52px;font-size:16px;color:#1c1c1c;font-weight:bold;font-family:'Liberation Serif',serif;">A</div>
<div style="position:absolute;left:567px;top:702px;width:18px;height:3px;background:#000"></div>
<svg style="position:absolute;left:591px;top:693px;" width="9" height="5" viewBox="0 0 9 5"><path d="M0.5 0 H8 L4.25 4 Z" fill="#000"/></svg>
<svg style="position:absolute;left:609px;top:686px;" width="19" height="16" viewBox="0 0 19 16"><path d="M4 9 L9 4 L13 8 L8 13 Z" fill="#fff" stroke="#333"/><path d="M9 3 V1.5 M12 7 Q16 8 16 12" fill="none" stroke="#1a3ab8" stroke-width="1.8"/></svg>
<div style="position:absolute;left:609px;top:702px;width:18px;height:3px;background:#fbf7b0"></div>
<svg style="position:absolute;left:634px;top:693px;" width="9" height="5" viewBox="0 0 9 5"><path d="M0.5 0 H8 L4.25 4 Z" fill="#000"/></svg>
<svg style="position:absolute;left:652px;top:686px;" width="19" height="16" viewBox="0 0 19 16"><path d="M6 13 L14 4 L16 6 L8 14 Z" fill="#2244cc" stroke="#112288"/><path d="M14 4 L16 2 L18 4 L16 6 Z" fill="#f0d020"/><path d="M2 13 H6" stroke="#2244cc" stroke-width="1.5"/></svg>
<div style="position:absolute;left:652px;top:702px;width:18px;height:3px;background:#000"></div>
<svg style="position:absolute;left:676px;top:693px;" width="9" height="5" viewBox="0 0 9 5"><path d="M0.5 0 H8 L4.25 4 Z" fill="#000"/></svg>
<svg style="position:absolute;left:695px;top:688px;" width="18" height="12" viewBox="0 0 18 12"><circle cx="9" cy="5" r="2.5" fill="#1a1aa8"/></svg>
<div style="position:absolute;left:695px;top:702px;width:18px;height:3px;background:#6de84a"></div>
<svg style="position:absolute;left:718px;top:693px;" width="9" height="5" viewBox="0 0 9 5"><path d="M0.5 0 H8 L4.25 4 Z" fill="#000"/></svg>
<div style="position:absolute;left:739px;top:684px;width:1px;height:26px;background:#ACA899"></div>
<div style="position:absolute;left:5px;top:710px;width:1013px;height:1px;background:#ACA899"></div>
<svg style="position:absolute;left:19px;top:64px;" width="13" height="14" viewBox="0 0 13 14"><path d="M0.8 0.8 H8 L11.5 4.3 V12.5 H0.8 Z" fill="#fff" stroke="#222" stroke-width="1.2"/><path d="M8 0.8 V4.3 H11.5" fill="none" stroke="#222" stroke-width="1"/></svg>
<svg style="position:absolute;left:41px;top:63px;" width="17" height="15" viewBox="0 0 17 15"><path d="M1 3.5 H5 L6 4.5 H10 V13 H1 Z" fill="#f0f070" stroke="#444" stroke-width="1"/><path d="M1 13 L4 7 H15 L12 13 Z" fill="#8a8a00" stroke="#333" stroke-width="1"/><path d="M8.5 3 Q11 0 14 2" fill="none" stroke="#333" stroke-width="1.1"/><path d="M13 1 L15.5 3 L12.8 4 Z" fill="#333"/></svg>
<svg style="position:absolute;left:65px;top:64px;" width="15" height="14" viewBox="0 0 15 14"><rect x="0.6" y="0.6" width="13.4" height="13" fill="#808000" stroke="#111" stroke-width="1.2"/><rect x="3" y="1" width="8" height="5.5" fill="#f4f4ee"/><rect x="3" y="9" width="8.5" height="5" fill="#111"/><rect x="8.5" y="10" width="2" height="3" fill="#eee"/></svg>
<svg style="position:absolute;left:88px;top:63px;" width="17" height="16" viewBox="0 0 17 16"><path d="M4 1 H13 L14 6 H3 Z" fill="#c8c8c8" stroke="#222" stroke-width="1"/><path d="M5 2.5 H12 M5 4 H12" stroke="#777" stroke-width="0.8"/><path d="M1 7 Q1 6 3 6 H14 Q16 6 16 8 V12 H1 Z" fill="#e8e8e8" stroke="#222" stroke-width="1.1"/><rect x="3" y="12" width="11" height="3" fill="#fff" stroke="#222" stroke-width="1"/><path d="M4 9.5 H13" stroke="#222" stroke-width="1"/><rect x="9" y="8.3" width="3" height="1.2" fill="#e8d030"/></svg>
<svg style="position:absolute;left:118px;top:63px;" width="12" height="15" viewBox="0 0 12 15"><path d="M3 0 L8 10 M9 0 L4 10" stroke="#b5b2a3" stroke-width="1.2"/><circle cx="3" cy="12" r="2.4" fill="none" stroke="#b5b2a3" stroke-width="1.2"/><circle cx="9" cy="12" r="2.4" fill="none" stroke="#b5b2a3" stroke-width="1.2"/></svg>
<svg style="position:absolute;left:141px;top:63px;" width="16" height="15" viewBox="0 0 16 15"><path d="M0.5 0.5 H6 L8 2.5 V10.5 H0.5 Z" fill="#e4e2d6" stroke="#b5b2a3"/><path d="M5.5 4.5 H11 L14.5 8 V14.5 H5.5 Z" fill="#ecebe0" stroke="#b5b2a3"/><path d="M2 4 H6 M2 6 H6 M7 9 H12 M7 11 H13 M7 13 H13" stroke="#b5b2a3" stroke-width="0.8"/></svg>
<svg style="position:absolute;left:165px;top:63px;" width="16" height="16" viewBox="0 0 16 16"><rect x="0.5" y="1.5" width="12" height="13" rx="1.5" fill="#b5b2a3"/><rect x="4" y="0.5" width="5" height="2.5" fill="#d8d6ca"/><path d="M6.5 7.5 H15 V15 H6.5 Z" fill="#ecebe0" stroke="#b5b2a3"/><path d="M8 10 H13 M8 12 H13" stroke="#b5b2a3" stroke-width="0.8"/></svg>
<svg style="position:absolute;left:189px;top:64px;" width="14" height="13" viewBox="0 0 14 13"><path d="M1 1 L12 12 M12 1 L1 12" stroke="#b5b2a3" stroke-width="1.8"/></svg>
<svg style="position:absolute;left:219px;top:65px;" width="15" height="11" viewBox="0 0 15 11"><path d="M3 5 Q6 1 10 2.5 Q13 4 11 8.5" fill="none" stroke="#1a30b0" stroke-width="1.8"/><path d="M1 3 L1.5 9 L6.5 7.5 Z" fill="#1a30b0"/></svg>
<svg style="position:absolute;left:242px;top:65px;" width="15" height="11" viewBox="0 0 15 11"><path d="M12 5 Q9 1 5 2.5 Q2 4 4 8.5" fill="none" stroke="#b5b2a3" stroke-width="1.6"/><path d="M14 3 L13.5 9 L8.5 7.5 Z" fill="#b5b2a3"/></svg>
<svg style="position:absolute;left:271px;top:63px;" width="17" height="17" viewBox="0 0 17 17"><path d="M0.5 6 H16 L8.25 15.5 Z" fill="#f4f000" stroke="#333" stroke-width="0.8"/><path d="M8.25 1 V11 M3 6 H13.5" stroke="#000" stroke-width="2.8"/></svg>
<svg style="position:absolute;left:296px;top:65px;" width="16" height="15" viewBox="0 0 16 15"><rect x="2.5" y="0.5" width="10" height="8" fill="#c8c8c8" stroke="#444" stroke-width="0.9"/><path d="M4.5 2 V7.5 M7.5 2 V7.5 M10.5 2 V7.5 M3 3.5 H12 M3 6 H12" stroke="#555" stroke-width="0.8"/><path d="M7.5 9 V12" stroke="#555" stroke-width="1.2"/><path d="M0 12.5 H15" stroke="#d8c800" stroke-width="1.6"/><circle cx="7.5" cy="12.5" r="1.6" fill="#fff" stroke="#555" stroke-width="0.7"/></svg>
<svg style="position:absolute;left:482px;top:63px;" width="17" height="17" viewBox="0 0 17 17"><g fill="#000"><rect x="0" y="8" width="3" height="3"/><rect x="0" y="13" width="3" height="3"/><rect x="6" y="13" width="3" height="3"/><rect x="12" y="13" width="3" height="3"/></g><path d="M2 10 L7 14" stroke="#000" stroke-width="1"/><path d="M7 11 L14 2 L16.5 4 L9.5 13 Z" fill="#f0e080" stroke="#222" stroke-width="1"/><path d="M14 2 L16.5 4 L17 1.5 L15.5 0.5 Z" fill="#e03030"/><path d="M7 11 L6.5 13.5 L9.5 13" fill="#222"/></svg>
<svg style="position:absolute;left:512px;top:63px;" width="18" height="17" viewBox="0 0 18 17"><path d="M6 1 H14 L17 3 V10 L14 12 H6 Z" fill="#f0f080" stroke="#555" stroke-width="0.9"/><path d="M14 1 V12" stroke="#a8a040" stroke-width="1"/><path d="M1 7 L8 5 L12 8 L12 14 L5 16 L1 13 Z" fill="#e8e860" stroke="#555" stroke-width="0.9"/><rect x="3" y="8.5" width="5" height="3" fill="#2050c0"/><rect x="4" y="9" width="2" height="2" fill="#40c0ff"/></svg>
<svg style="position:absolute;left:536px;top:64px;" width="16" height="16" viewBox="0 0 16 16"><path d="M5 2 H11 V4" fill="none" stroke="#222" stroke-width="1.3"/><path d="M1 4.5 H15 V14.5 H1 Z" fill="#e02020" stroke="#700" stroke-width="1"/><path d="M1 8 H15" stroke="#900" stroke-width="1"/><rect x="6" y="7" width="4" height="3" fill="#fff"/></svg>
<svg style="position:absolute;left:560px;top:64px;" width="16" height="14" viewBox="0 0 16 14"><rect x="0.7" y="0.7" width="14" height="12" fill="#fff" stroke="#111" stroke-width="1.2"/><rect x="1" y="1" width="13.6" height="2.6" fill="#1a3ab0"/><path d="M3 6 V8" stroke="#555" stroke-width="0.8"/></svg>
<svg style="position:absolute;left:583px;top:64px;" width="17" height="15" viewBox="0 0 17 15"><path d="M3 3 V12 M3 7.5 H14" stroke="#1a3ab0" stroke-width="1.3"/><rect x="0.5" y="0.5" width="4.5" height="4" fill="#1a3ae0"/><rect x="0.5" y="10" width="4.5" height="4" fill="#1a3ae0"/><circle cx="9" cy="7.5" r="2.6" fill="#f0f000" stroke="#aa0" stroke-width="0.5"/><circle cx="14.5" cy="7.5" r="2.3" fill="#22dd22"/></svg>
<svg style="position:absolute;left:613px;top:65px;" width="18" height="15" viewBox="0 0 18 15"><path d="M1 1 V12 L3.5 9.5 L6 14 L8 13 L5.5 8.5 H9 Z" fill="#000"/><text x="13.5" y="11" font-family="Liberation Serif" font-weight="bold" font-size="13" fill="#1a2a90" text-anchor="middle">?</text></svg>
<div style="position:absolute;left:640px;top:60px;width:1px;height:23px;background:#fff"></div>
<div style="position:absolute;left:641px;top:60px;width:1px;height:23px;background:#d6d3c4"></div>
<svg style="position:absolute;left:650px;top:64px;" width="16" height="16" viewBox="0 0 16 16"><circle cx="7" cy="7" r="5.6" fill="#fff" stroke="#555" stroke-width="1.8"/><circle cx="7" cy="7" r="4" fill="#eeeeee" stroke="#aaa" stroke-width="0.6"/><path d="M10.8 10.8 L14.5 14.5" stroke="#c00010" stroke-width="2.6" stroke-linecap="round"/><path d="M4.2 7 H9.8 M7 4.2 V9.8" stroke="#000" stroke-width="1.9"/></svg>
<svg style="position:absolute;left:674px;top:64px;" width="16" height="16" viewBox="0 0 16 16"><circle cx="7" cy="7" r="5.6" fill="#fff" stroke="#555" stroke-width="1.8"/><circle cx="7" cy="7" r="4" fill="#eeeeee" stroke="#aaa" stroke-width="0.6"/><path d="M10.8 10.8 L14.5 14.5" stroke="#c00010" stroke-width="2.6" stroke-linecap="round"/><path d="M4.2 7 H9.8" stroke="#000" stroke-width="1.9"/></svg>
<svg style="position:absolute;left:699px;top:65px;" width="14" height="14" viewBox="0 0 14 14"><path d="M1.5 1.5 L5.5 5.5" stroke="#000" stroke-width="1.4"/><path d="M6.3 6.3 L2.5 6.3 L6.3 2.5 Z" fill="#000"/><path d="M12.5 1.5 L8.5 5.5" stroke="#000" stroke-width="1.4"/><path d="M7.7 6.3 L11.5 6.3 L7.7 2.5 Z" fill="#000"/><path d="M1.5 12.5 L5.5 8.5" stroke="#000" stroke-width="1.4"/><path d="M6.3 7.7 L2.5 7.7 L6.3 11.5 Z" fill="#000"/><path d="M12.5 12.5 L8.5 8.5" stroke="#000" stroke-width="1.4"/><path d="M7.7 7.7 L11.5 7.7 L7.7 11.5 Z" fill="#000"/></svg>
<svg style="position:absolute;left:722.5px;top:65px;" width="14" height="14" viewBox="0 0 14 14"><path d="M5.5 5.5 L1.5 1.5" stroke="#000" stroke-width="1.4"/><path d="M0.7 0.7 L4.5 0.7 L0.7 4.5 Z" fill="#000"/><path d="M8.5 5.5 L12.5 1.5" stroke="#000" stroke-width="1.4"/><path d="M13.3 0.7 L9.5 0.7 L13.3 4.5 Z" fill="#000"/><path d="M5.5 8.5 L1.5 12.5" stroke="#000" stroke-width="1.4"/><path d="M0.7 13.3 L4.5 13.3 L0.7 9.5 Z" fill="#000"/><path d="M8.5 8.5 L12.5 12.5" stroke="#000" stroke-width="1.4"/><path d="M13.3 13.3 L9.5 13.3 L13.3 9.5 Z" fill="#000"/></svg>
<div style="position:absolute;left:741px;top:61px;width:24px;height:22px;background:#f6f5ef;box-sizing:border-box;border:1px solid;border-color:#c9c6b6 #fff #fff #c9c6b6"></div>
<svg style="position:absolute;left:745px;top:64px;" width="17" height="16" viewBox="0 0 17 16"><path d="M4.5 15 L1.5 9.5 Q0.5 8 2 7.5 Q3 7.3 4 8.5 V3 Q4 1.8 5 1.8 Q6 1.8 6 3 V2 Q6 0.8 7.2 0.8 Q8.4 0.8 8.4 2 V2.6 Q8.6 1.5 9.6 1.5 Q10.8 1.5 10.8 2.8 V4 Q11 3 12 3 Q13.2 3 13.2 4.2 V10 Q13.2 13 11.5 15 Z" fill="#fff" stroke="#111" stroke-width="1"/><path d="M6 3 V8 M8.4 2.6 V8 M10.8 4 V8" stroke="#111" stroke-width="0.8"/></svg>
<svg style="position:absolute;left:769px;top:64px;" width="16" height="16" viewBox="0 0 16 16"><circle cx="8" cy="8" r="7.3" fill="#1a3ab8" stroke="#0a1050" stroke-width="1"/><path d="M3 5 Q5 2.5 8 3 L10 5 L9 8 L11 10 L8 12 L6 9 L3.5 8.5 Z" fill="#2a9a3a"/><path d="M11 3 L13 4.5 L12.5 6 Z" fill="#2a9a3a"/><path d="M2.5 6 Q3 3 5.5 2" fill="none" stroke="#c8d8ff" stroke-width="1"/></svg>
<svg style="position:absolute;left:792px;top:64px;" width="16" height="15" viewBox="0 0 16 15"><path d="M1 7.5 L7 1.5 V5 H15 V10 H7 V13.5 Z" fill="#0000f0" stroke="#000060" stroke-width="0.8"/><path d="M7 13.5 L8 14.5 V11 H15.5 V10" fill="none" stroke="#555" stroke-width="0.8"/></svg>
<svg style="position:absolute;left:815px;top:64px;" width="16" height="15" viewBox="0 0 16 15"><path d="M15 7.5 L9 1.5 V5 H1 V10 H9 V13.5 Z" fill="#b8b5a6"/></svg>
<svg style="position:absolute;left:840px;top:63px;" width="16" height="17" viewBox="0 0 16 17"><rect x="6.5" y="0.5" width="8.5" height="8" fill="#fff" stroke="#333" stroke-width="1"/><path d="M7 8 L15 1 V8 Z" fill="#20d8e0"/><path d="M7 1 L15 8" stroke="#333" stroke-width="0.6"/><path d="M1 4 V15 L3.5 12.5 L6 16.5 L7.5 15.8 L5.3 11.8 H8.5 Z" fill="#fff" stroke="#333" stroke-width="0.8"/></svg>
<svg style="position:absolute;left:866px;top:66px;" width="12" height="12" viewBox="0 0 12 12"><rect x="0.7" y="0.7" width="10.6" height="10.4" fill="#fff" stroke="#222" stroke-width="1.3"/><path d="M2.5 2.5 L9.5 9.5 M2.5 9 L5 4" stroke="#333" stroke-width="1"/></svg>
<svg style="position:absolute;left:891px;top:64px;" width="11" height="15" viewBox="0 0 11 15"><path d="M0.5 0.5 V12 L3.3 9.3 L6 14.5 L8.3 13.5 L5.7 8.5 H9.8 Z" fill="#000"/></svg>
<svg style="position:absolute;left:912px;top:64px;" width="15" height="15" viewBox="0 0 15 15"><circle cx="7.5" cy="7.5" r="7" fill="#0a0aa0"/><text x="7.5" y="12" font-family="Liberation Serif" font-weight="bold" font-size="11" fill="#fff" text-anchor="middle">i</text></svg>
<svg style="position:absolute;left:935px;top:65px;" width="16" height="13" viewBox="0 0 16 13"><path d="M1 6 L3 1 H6 V6 H10 V1 H13 L15 6 V12 H9.5 V9 H6.5 V12 H1 Z" fill="#111"/><rect x="2" y="9" width="2.5" height="2" fill="#fff"/><rect x="11.5" y="9" width="2.5" height="2" fill="#fff"/></svg>
<svg style="position:absolute;left:959px;top:64px;" width="16" height="15" viewBox="0 0 16 15"><rect x="5" y="0.5" width="6" height="6" fill="#1a4ae0"/><rect x="6.7" y="2.2" width="2.6" height="2.6" fill="#30c8ff"/><text x="8" y="14.5" font-family="Liberation Sans" font-size="8" fill="#222" text-anchor="middle" letter-spacing="1">XY</text></svg>
<svg style="position:absolute;left:982px;top:63px;" width="17" height="16" viewBox="0 0 17 16"><text x="8.5" y="8.5" font-family="Liberation Sans" font-size="10" fill="#111" text-anchor="middle">?</text><path d="M1.5 7.5 H15.5" stroke="#111" stroke-width="1.2"/><path d="M0.3 7.5 L3.5 5 V10 Z M16.7 7.5 L13.5 5 V10 Z" fill="#111"/><rect x="1.5" y="11" width="14" height="4" rx="1" fill="#333" stroke="#111" stroke-width="1"/><path d="M3.5 12.5 H13.5" stroke="#ddd" stroke-width="1" stroke-dasharray="1 1"/></svg>
<svg style="position:absolute;left:1007px;top:62px;" width="11" height="17" viewBox="0 0 11 17"><path d="M10 0.5 L3 5.5 L6 6.5 L1.5 10 L5 11 L1 16 L9.5 9.5 L6 8.5 L10 5 L7 4 Z" fill="#b5b2a2"/></svg>
<div style="position:absolute;left:1017px;top:56px;width:1px;height:30px;background:#ECE9D8"></div>
<svg style="position:absolute;left:311px;top:92px;" width="16" height="17" viewBox="0 0 16 17"><path d="M0.5 0.5 H11 L14.5 4 V15.5 H0.5 Z" fill="none" stroke="#c8c5b6" stroke-width="1"/><circle cx="6.5" cy="7.5" r="5" fill="#a8a598"/><path d="M10 11 L13 15" stroke="#a8a598" stroke-width="2.5"/><circle cx="5" cy="5.5" r="1.5" fill="#c8c5b6"/></svg>
<svg style="position:absolute;left:335px;top:92px;" width="16" height="17" viewBox="0 0 16 17"><path d="M0.5 0.5 H11 L14.5 4 V15.5 H0.5 Z" fill="none" stroke="#c8c5b6" stroke-width="1"/><circle cx="6.5" cy="7.5" r="5" fill="#a8a598"/><path d="M10 11 L13 15" stroke="#a8a598" stroke-width="2.5"/><circle cx="5" cy="5.5" r="1.5" fill="#c8c5b6"/></svg>
<svg style="position:absolute;left:359px;top:92px;" width="16" height="17" viewBox="0 0 16 17"><path d="M0.5 0.5 H11 L14.5 4 V15.5 H0.5 Z" fill="none" stroke="#c8c5b6" stroke-width="1"/><path d="M5 15 L2 10 Q1.5 9 2.5 8.7 L4 9.5 V5 Q4 4 5 4 Q6 4 6 5 V4 Q6 3 7 3 Q8 3 8 4 V4.5 Q8.3 3.8 9 3.8 Q10 3.8 10 4.8 V6 Q10.3 5.3 11 5.3 Q12 5.3 12 6.3 V11 Q12 13.5 10.5 15 Z" fill="#f4f3ec" stroke="#a8a598" stroke-width="0.9"/></svg>
<svg style="position:absolute;left:388px;top:93px;" width="14" height="14" viewBox="0 0 14 14"><rect x="0.5" y="0.5" width="13" height="13" fill="none" stroke="#c8c5b6"/><rect x="2.0" y="2.0" width="3" height="3" fill="#a8a598"/><rect x="9.0" y="2.0" width="3" height="3" fill="#a8a598"/><rect x="2.0" y="9.0" width="3" height="3" fill="#a8a598"/><rect x="9.0" y="9.0" width="3" height="3" fill="#a8a598"/></svg>
<svg style="position:absolute;left:412px;top:93px;" width="14" height="14" viewBox="0 0 14 14"><rect x="0.5" y="0.5" width="13" height="13" fill="none" stroke="#c8c5b6"/><rect x="2.0" y="2.0" width="3" height="3" fill="#a8a598"/><rect x="9.0" y="2.0" width="3" height="3" fill="#a8a598"/><rect x="2.0" y="9.0" width="3" height="3" fill="#a8a598"/><rect x="9.0" y="9.0" width="3" height="3" fill="#a8a598"/><path d="M5 5 L9 9 M9 5 L5 9" stroke="#a8a598" stroke-width="0.8"/></svg>
<svg style="position:absolute;left:436px;top:93px;" width="14" height="14" viewBox="0 0 14 14"><rect x="0.5" y="0.5" width="13" height="13" fill="none" stroke="#c8c5b6"/><rect x="2.0" y="2.0" width="3" height="3" fill="#a8a598"/><rect x="9.0" y="2.0" width="3" height="3" fill="#a8a598"/><rect x="2.0" y="9.0" width="3" height="3" fill="#a8a598"/><rect x="9.0" y="9.0" width="3" height="3" fill="#a8a598"/></svg>
<svg style="position:absolute;left:460px;top:93px;" width="14" height="14" viewBox="0 0 14 14"><rect x="0.5" y="0.5" width="13" height="13" fill="none" stroke="#c8c5b6"/><text x="7" y="10.5" font-family="Liberation Sans" font-size="8.5" font-weight="bold" fill="#a8a598" text-anchor="middle">1:1</text></svg>
<svg style="position:absolute;left:489px;top:92px;" width="16" height="16" viewBox="0 0 16 16"><path d="M0.5 0.5 H10 L13.5 4 V13.5 H0.5 Z" fill="none" stroke="#c8c5b6"/><path d="M2 9 L7 5 V7.5 H13 V11 H7 V13.5 Z" fill="#a8a598"/></svg>
<svg style="position:absolute;left:513px;top:92px;" width="16" height="16" viewBox="0 0 16 16"><path d="M0.5 0.5 H10 L13.5 4 V13.5 H0.5 Z" fill="none" stroke="#c8c5b6"/><path d="M15 9 L10 5 V7.5 H3 V11 H10 V13.5 Z" fill="#a8a598"/></svg>
<svg style="position:absolute;left:607px;top:93px;" width="14" height="14" viewBox="0 0 14 14"><rect x="0.5" y="0.5" width="13" height="13" fill="#f4f3ec" stroke="#c8c5b6"/><rect x="2" y="2.5" width="10" height="9" fill="#a8a598"/></svg>
<svg style="position:absolute;left:631px;top:93px;" width="14" height="14" viewBox="0 0 14 14"><rect x="0.5" y="0.5" width="13" height="13" fill="#f4f3ec" stroke="#c8c5b6"/><rect x="2" y="2.5" width="10" height="9" fill="#a8a598"/></svg>
<svg style="position:absolute;left:660px;top:93px;" width="19" height="16" viewBox="0 0 19 16"><path d="M4 6 Q4 1.5 9 1.5 Q14 1.5 14 5" fill="none" stroke="#111" stroke-width="1.2"/><path d="M12 4 L16 4 L14 7 Z" fill="#111"/><rect x="1" y="7.5" width="7" height="7.5" fill="#9a9a90" stroke="#111" stroke-width="1.1"/><rect x="10" y="7.5" width="7" height="7.5" fill="#9a9a90" stroke="#111" stroke-width="1.1"/><rect x="3" y="10" width="3" height="2.5" fill="#fff"/><rect x="12" y="10" width="3" height="2.5" fill="#fff"/></svg>
<div style="position:absolute;left:685px;top:88px;width:1px;height:27px;background:#fff"></div>
<div style="position:absolute;left:686px;top:88px;width:1px;height:27px;background:#d6d3c4"></div>
<div style="position:absolute;left:1016px;top:28px;width:1px;height:28px;background:#c8c5b5"></div>
</div></body></html>
